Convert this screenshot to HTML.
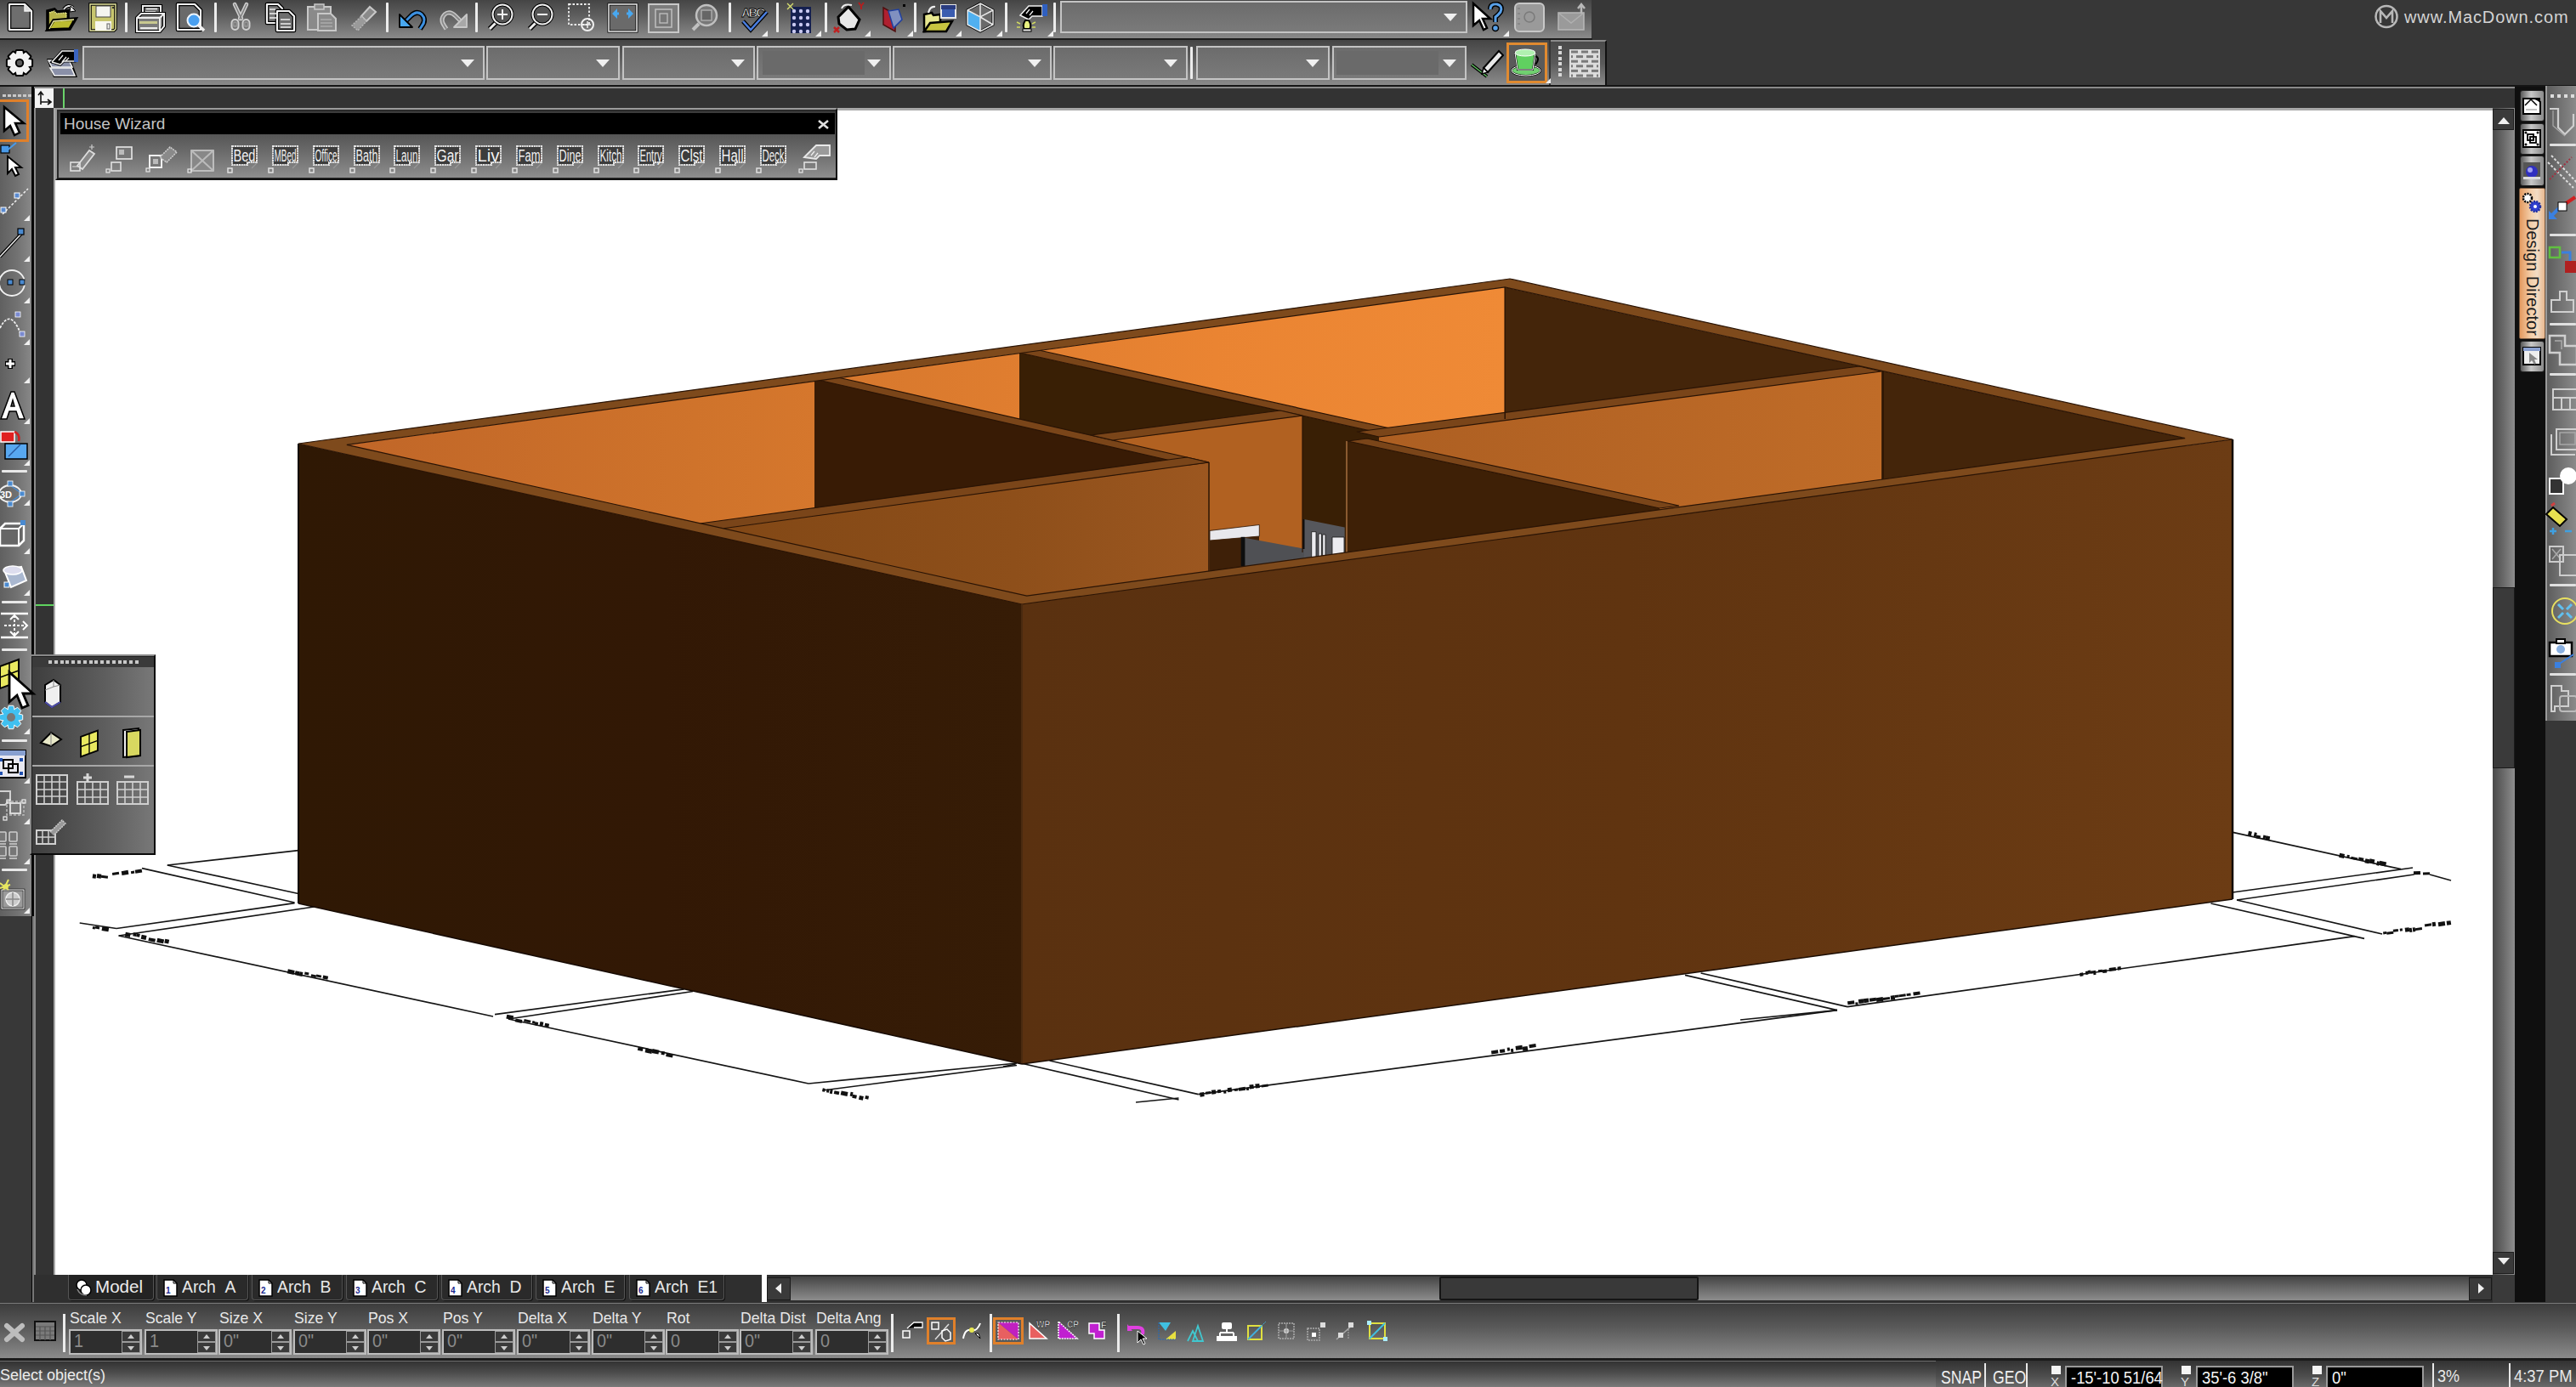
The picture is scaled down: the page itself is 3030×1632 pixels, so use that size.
<!DOCTYPE html><html><head><meta charset="utf-8"><style>
*{margin:0;padding:0;box-sizing:border-box}
html,body{width:3030px;height:1632px;overflow:hidden;background:#373737;font-family:"Liberation Sans",sans-serif}
.a{position:absolute}
.tb{background:linear-gradient(#454545,#5e5e5e 40%,#8a8a8a)}
.combo{position:absolute;border:2px solid #c4c4c4;background:linear-gradient(#6c6c6c,#7a7a7a)}
.combo:after{content:"";position:absolute;right:10px;top:50%;margin-top:-4px;border-left:8px solid transparent;border-right:8px solid transparent;border-top:9px solid #f0f0f0}
.sep{position:absolute;width:3px;background:#e8e8e8;border-radius:1px}
svg{position:absolute;overflow:visible}
</style></head><body>
<div class="a tb" style="left:0px;top:0px;width:1872px;height:45px;"></div>
<div class="a" style="left:0px;top:45px;width:1873px;height:2px;background:#1c1c1c"></div>
<div class="a tb" style="left:0px;top:47px;width:1822px;height:53px;"></div>
<div class="a" style="left:1824px;top:47px;width:66px;height:53px;border-top:2px solid #8a8a8a;border-right:2px solid #111;background:linear-gradient(#4a4a4a,#5a5a5a 50%,#8a8a8a)"></div>
<div class="a" style="left:0px;top:100px;width:3030px;height:3px;background:#151515"></div>
<div class="a" style="left:40px;top:102px;width:2918px;height:2px;background:#8a8a8a"></div>
<div class="a" style="left:40px;top:104px;width:2918px;height:23px;background:#333"></div>
<div class="a" style="left:41px;top:104px;width:22px;height:23px;background:#f2f2f2"></div>
<div class="a" style="left:74px;top:104px;width:2px;height:23px;background:#6ad36a"></div>
<div class="a" style="left:63px;top:127px;width:2869px;height:1373px;background:#fff"></div>
<div class="a" style="left:63px;top:127px;width:2869px;height:3px;background:#a8a8a8"></div>
<div class="a" style="left:63px;top:127px;width:2px;height:1373px;background:#a8a8a8"></div>
<div class="a" style="left:40px;top:127px;width:23px;height:1373px;background:#333"></div>
<div class="a" style="left:40px;top:711px;width:23px;height:2px;background:#5fd35f"></div>
<div class="a" style="left:0px;top:102px;width:37px;height:976px;background:linear-gradient(90deg,#606060,#727272 55%,#888)"></div>
<div class="a" style="left:0px;top:1078px;width:36px;height:454px;background:#383838"></div>
<div class="a" style="left:37px;top:102px;width:3px;height:1430px;background:#050505"></div>
<div class="a" style="left:40px;top:127px;width:2px;height:1373px;background:#8a8a8a"></div>
<div class="a" style="left:38px;top:1078px;width:2px;height:454px;background:#777"></div>
<div class="a" style="left:2932px;top:127px;width:26px;height:1373px;background:linear-gradient(90deg,#4a4a4a,#6a6a6a 50%,#8e8e8e)"></div>
<div class="a" style="left:2932px;top:128px;width:25px;height:25px;background:#3a3a3a;border:1px solid #1e1e1e"></div>
<div class="a" style="left:2932px;top:1473px;width:25px;height:26px;background:#3a3a3a;border:1px solid #1e1e1e"></div>
<div class="a" style="left:2932px;top:691px;width:26px;height:213px;background:#3a3a3a;border:1px solid #1a1a1a"></div>
<div class="a" style="left:2958px;top:102px;width:36px;height:1430px;background:#0f0f0f"></div>
<div class="a" style="left:2994px;top:101px;width:36px;height:747px;background:linear-gradient(90deg,#5a5a5a,#8a8a8a)"></div>
<div class="a" style="left:2994px;top:101px;width:2px;height:747px;background:#9a9a9a"></div>
<div class="a" style="left:40px;top:1500px;width:2892px;height:33px;background:#2f2f2f"></div>
<div class="a" style="left:2932px;top:1500px;width:26px;height:32px;background:#3a3a3a"></div>
<div class="a" style="left:930px;top:1502px;width:1974px;height:28px;background:linear-gradient(#444,#666 45%,#8c8c8c)"></div>
<div class="a" style="left:902px;top:1503px;width:28px;height:27px;background:#3a3a3a;border:1px solid #1a1a1a"></div>
<div class="a" style="left:2904px;top:1503px;width:27px;height:27px;background:#3a3a3a;border:1px solid #1a1a1a"></div>
<div class="a" style="left:1693px;top:1502px;width:305px;height:28px;background:#393939;border:2px solid #151515;border-radius:2px"></div>
<div class="a" style="left:0px;top:1533px;width:3030px;height:65px;background:linear-gradient(#3c3c3c,#5a5a5a 45%,#8a8a8a)"></div>
<div class="a" style="left:0px;top:1533px;width:3030px;height:1px;background:#7a7a7a"></div>
<div class="a" style="left:0px;top:1598px;width:3030px;height:3px;background:#1a1a1a"></div>
<div class="a" style="left:0px;top:1601px;width:3030px;height:31px;background:linear-gradient(#303030,#4c4c4c 45%,#7a7a7a)"></div>
<div class="a" style="left:0px;top:1601px;width:3030px;height:1px;background:#6e6e6e"></div>
<svg width="3030" height="1632" style="left:0;top:0" viewBox="0 0 3030 1632">
<defs>
<linearGradient id="gAB" x1="0" y1="0" x2="1" y2="0" gradientUnits="objectBoundingBox"><stop offset="0" stop-color="#c06628"/><stop offset="0.3" stop-color="#cf732b"/><stop offset="0.75" stop-color="#ea8432"/><stop offset="1" stop-color="#ef8a36"/></linearGradient>
<linearGradient id="gDC" x1="0" y1="0" x2="1" y2="0"><stop offset="0" stop-color="#5a3110"/><stop offset="0.5" stop-color="#603410"/><stop offset="1" stop-color="#6c3c14"/></linearGradient>
<linearGradient id="gAD" x1="0" y1="0" x2="1" y2="0"><stop offset="0" stop-color="#2f1804"/><stop offset="0.5" stop-color="#321805"/><stop offset="1" stop-color="#361c06"/></linearGradient>
<linearGradient id="gW2" x1="0" y1="0" x2="1" y2="0"><stop offset="0" stop-color="#824816"/><stop offset="0.6" stop-color="#8e4f1a"/><stop offset="1" stop-color="#9c5720"/></linearGradient>
<linearGradient id="gW5" x1="0" y1="0" x2="1" y2="0"><stop offset="0" stop-color="#ad5f22"/><stop offset="1" stop-color="#c06c28"/></linearGradient>
</defs>
<line x1="196.8" y1="1018.0" x2="351.0" y2="1000.6" stroke="#151515" stroke-width="1.7"/>
<line x1="196.8" y1="1018.0" x2="351.0" y2="1051.5" stroke="#151515" stroke-width="1.7"/>
<line x1="167.0" y1="1021.7" x2="346.5" y2="1062.0" stroke="#151515" stroke-width="1.7"/>
<line x1="137.0" y1="1092.5" x2="346.5" y2="1062.7" stroke="#151515" stroke-width="1.7"/>
<line x1="93.7" y1="1086.0" x2="137.0" y2="1092.5" stroke="#151515" stroke-width="1.7"/>
<line x1="139.6" y1="1101.0" x2="369.4" y2="1067.0" stroke="#151515" stroke-width="1.7"/>
<line x1="139.6" y1="1101.0" x2="580.0" y2="1196.0" stroke="#151515" stroke-width="1.7"/>
<line x1="582.0" y1="1193.7" x2="804.6" y2="1163.8" stroke="#151515" stroke-width="1.7"/>
<line x1="598.0" y1="1199.0" x2="815.0" y2="1166.5" stroke="#151515" stroke-width="1.7"/>
<line x1="598.0" y1="1199.0" x2="951.0" y2="1275.0" stroke="#151515" stroke-width="1.7"/>
<line x1="951.0" y1="1275.0" x2="1196.0" y2="1251.0" stroke="#151515" stroke-width="1.7"/>
<line x1="967.6" y1="1283.0" x2="1196.0" y2="1253.5" stroke="#151515" stroke-width="1.7"/>
<line x1="1180.0" y1="1255.0" x2="1194.7" y2="1252.0" stroke="#151515" stroke-width="1.7"/>
<line x1="1201.0" y1="1251.0" x2="1386.5" y2="1294.0" stroke="#151515" stroke-width="1.7"/>
<line x1="1234.5" y1="1248.0" x2="1409.6" y2="1287.7" stroke="#151515" stroke-width="1.7"/>
<line x1="1409.6" y1="1287.7" x2="2161.0" y2="1188.7" stroke="#151515" stroke-width="1.7"/>
<line x1="1336.0" y1="1297.0" x2="1386.5" y2="1292.0" stroke="#151515" stroke-width="1.7"/>
<line x1="1982.0" y1="1147.4" x2="2161.0" y2="1188.7" stroke="#151515" stroke-width="1.7"/>
<line x1="2000.6" y1="1145.0" x2="2173.0" y2="1184.6" stroke="#151515" stroke-width="1.7"/>
<line x1="2173.0" y1="1184.6" x2="2769.6" y2="1101.6" stroke="#151515" stroke-width="1.7"/>
<line x1="2047.0" y1="1200.0" x2="2161.0" y2="1188.7" stroke="#151515" stroke-width="1.7"/>
<line x1="2626.4" y1="979.3" x2="2824.0" y2="1022.7" stroke="#151515" stroke-width="1.7"/>
<line x1="2626.0" y1="1050.0" x2="2838.0" y2="1021.0" stroke="#151515" stroke-width="1.7"/>
<line x1="2631.0" y1="1059.0" x2="2839.5" y2="1029.0" stroke="#151515" stroke-width="1.7"/>
<line x1="2858.0" y1="1029.0" x2="2883.0" y2="1036.0" stroke="#151515" stroke-width="1.7"/>
<line x1="2631.0" y1="1059.0" x2="2802.0" y2="1099.0" stroke="#151515" stroke-width="1.7"/>
<line x1="2600.5" y1="1063.0" x2="2781.0" y2="1104.4" stroke="#151515" stroke-width="1.7"/>
<g transform="translate(117.5 1031.0) rotate(8)"><rect x="-8.5" y="-1.5" width="4" height="5" fill="#111"/><rect x="-3.5" y="-2.5" width="5" height="5" fill="#111"/><rect x="1.5" y="-1.5" width="8" height="3" fill="#111"/></g>
<g transform="translate(149.5 1026.5) rotate(-10)"><rect x="-17.5" y="-2.5" width="8" height="3" fill="#111"/><rect x="-6.5" y="-2.5" width="8" height="5" fill="#111"/><rect x="4.5" y="-0.5" width="4" height="3" fill="#111"/><rect x="9.5" y="-1.0" width="8" height="4" fill="#111"/></g>
<g transform="translate(117.5 1092.0) rotate(10)"><rect x="-8.5" y="-0.5" width="3" height="3" fill="#111"/><rect x="-5.5" y="-1.5" width="5" height="3" fill="#111"/><rect x="2.5" y="-2.5" width="8" height="5" fill="#111"/></g>
<g transform="translate(174.5 1104.0) rotate(12)"><rect x="-27.5" y="-1.5" width="6" height="5" fill="#111"/><rect x="-18.5" y="-3.0" width="4" height="4" fill="#111"/><rect x="-14.5" y="-3.0" width="4" height="4" fill="#111"/><rect x="-8.5" y="-2.5" width="6" height="5" fill="#111"/><rect x="0.5" y="-1.0" width="8" height="4" fill="#111"/><rect x="10.5" y="-2.5" width="8" height="5" fill="#111"/><rect x="19.5" y="-3.5" width="5" height="5" fill="#111"/></g>
<g transform="translate(363.0 1147.0) rotate(12)"><rect x="-25.0" y="-1.5" width="8" height="5" fill="#111"/><rect x="-16.0" y="-1.5" width="5" height="5" fill="#111"/><rect x="-11.0" y="-1.5" width="4" height="5" fill="#111"/><rect x="-5.0" y="-2.5" width="5" height="3" fill="#111"/><rect x="3.0" y="-1.5" width="6" height="3" fill="#111"/><rect x="9.0" y="-2.5" width="6" height="3" fill="#111"/><rect x="17.0" y="-3.0" width="6" height="4" fill="#111"/></g>
<g transform="translate(623.5 1203.0) rotate(12)"><rect x="-28.5" y="-3.5" width="8" height="5" fill="#111"/><rect x="-17.5" y="-1.0" width="8" height="4" fill="#111"/><rect x="-7.5" y="-2.5" width="8" height="3" fill="#111"/><rect x="2.5" y="-2.5" width="3" height="3" fill="#111"/><rect x="5.5" y="-2.0" width="4" height="4" fill="#111"/><rect x="11.5" y="-3.5" width="4" height="5" fill="#111"/><rect x="17.5" y="-3.0" width="5" height="4" fill="#111"/></g>
<g transform="translate(772.0 1237.5) rotate(12)"><rect x="-22.0" y="-1.0" width="6" height="4" fill="#111"/><rect x="-13.0" y="-1.5" width="8" height="5" fill="#111"/><rect x="-5.0" y="-2.5" width="8" height="5" fill="#111"/><rect x="6.0" y="-2.0" width="4" height="4" fill="#111"/><rect x="12.0" y="-1.0" width="8" height="4" fill="#111"/></g>
<g transform="translate(997.0 1287.5) rotate(12)"><rect x="-30.0" y="-1.0" width="3" height="4" fill="#111"/><rect x="-25.0" y="-1.0" width="3" height="4" fill="#111"/><rect x="-21.0" y="-1.5" width="3" height="5" fill="#111"/><rect x="-16.0" y="-1.0" width="6" height="4" fill="#111"/><rect x="-8.0" y="-2.5" width="8" height="5" fill="#111"/><rect x="3.0" y="-3.5" width="3" height="5" fill="#111"/><rect x="6.0" y="-1.0" width="5" height="4" fill="#111"/><rect x="14.0" y="-1.5" width="5" height="5" fill="#111"/><rect x="21.0" y="-3.0" width="4" height="4" fill="#111"/></g>
<g transform="translate(1452.5 1282.5) rotate(-8)"><rect x="-41.5" y="-2.5" width="5" height="5" fill="#111"/><rect x="-34.5" y="-2.5" width="6" height="3" fill="#111"/><rect x="-27.5" y="-3.5" width="5" height="5" fill="#111"/><rect x="-20.5" y="-3.0" width="4" height="4" fill="#111"/><rect x="-13.5" y="-0.5" width="3" height="3" fill="#111"/><rect x="-8.5" y="-3.5" width="5" height="5" fill="#111"/><rect x="-0.5" y="-1.5" width="4" height="3" fill="#111"/><rect x="4.5" y="-2.0" width="8" height="4" fill="#111"/><rect x="13.5" y="-0.5" width="3" height="3" fill="#111"/><rect x="17.5" y="-3.5" width="5" height="5" fill="#111"/><rect x="24.5" y="-3.5" width="5" height="5" fill="#111"/><rect x="31.5" y="-1.5" width="8" height="3" fill="#111"/></g>
<g transform="translate(1778.5 1235.0) rotate(-8)"><rect x="-24.5" y="-2.0" width="8" height="4" fill="#111"/><rect x="-14.5" y="-2.0" width="6" height="4" fill="#111"/><rect x="-5.5" y="-3.0" width="3" height="4" fill="#111"/><rect x="-1.5" y="-1.0" width="3" height="4" fill="#111"/><rect x="4.5" y="-3.5" width="8" height="5" fill="#111"/><rect x="12.5" y="-1.5" width="6" height="5" fill="#111"/><rect x="20.5" y="-3.0" width="8" height="4" fill="#111"/></g>
<g transform="translate(2215.0 1175.5) rotate(-8)"><rect x="-42.0" y="-3.0" width="8" height="4" fill="#111"/><rect x="-33.0" y="-0.5" width="3" height="3" fill="#111"/><rect x="-29.0" y="-3.5" width="6" height="5" fill="#111"/><rect x="-23.0" y="-3.5" width="6" height="5" fill="#111"/><rect x="-16.0" y="-3.0" width="8" height="4" fill="#111"/><rect x="-8.0" y="-2.5" width="8" height="5" fill="#111"/><rect x="0.0" y="-1.5" width="8" height="3" fill="#111"/><rect x="9.0" y="-2.5" width="5" height="5" fill="#111"/><rect x="14.0" y="-2.5" width="5" height="3" fill="#111"/><rect x="19.0" y="-2.5" width="8" height="3" fill="#111"/><rect x="28.0" y="-2.5" width="5" height="3" fill="#111"/><rect x="36.0" y="-3.0" width="8" height="4" fill="#111"/></g>
<g transform="translate(2470.5 1142.5) rotate(-8)"><rect x="-24.5" y="-1.0" width="4" height="4" fill="#111"/><rect x="-17.5" y="-2.0" width="3" height="4" fill="#111"/><rect x="-14.5" y="-2.5" width="3" height="3" fill="#111"/><rect x="-11.5" y="-1.5" width="3" height="3" fill="#111"/><rect x="-8.5" y="-1.5" width="3" height="5" fill="#111"/><rect x="-2.5" y="-1.5" width="5" height="3" fill="#111"/><rect x="2.5" y="-1.0" width="5" height="4" fill="#111"/><rect x="10.5" y="-2.0" width="8" height="4" fill="#111"/><rect x="20.5" y="-2.0" width="4" height="4" fill="#111"/></g>
<g transform="translate(2657.0 984.0) rotate(12)"><rect x="-13.0" y="-3.5" width="4" height="5" fill="#111"/><rect x="-6.0" y="-3.5" width="3" height="5" fill="#111"/><rect x="-3.0" y="-1.0" width="5" height="4" fill="#111"/><rect x="5.0" y="-2.5" width="3" height="5" fill="#111"/><rect x="8.0" y="-2.5" width="5" height="5" fill="#111"/></g>
<g transform="translate(2778.5 1012.0) rotate(12)"><rect x="-27.5" y="-2.5" width="6" height="5" fill="#111"/><rect x="-18.5" y="-2.5" width="3" height="3" fill="#111"/><rect x="-13.5" y="-1.5" width="8" height="3" fill="#111"/><rect x="-4.5" y="-2.5" width="6" height="3" fill="#111"/><rect x="3.5" y="-2.5" width="5" height="5" fill="#111"/><rect x="8.5" y="-3.5" width="6" height="5" fill="#111"/><rect x="17.5" y="-2.5" width="3" height="5" fill="#111"/><rect x="20.5" y="-3.5" width="8" height="5" fill="#111"/></g>
<g transform="translate(2824.0 1095.0) rotate(-8)"><rect x="-21.0" y="-1.5" width="4" height="3" fill="#111"/><rect x="-17.0" y="-0.5" width="8" height="3" fill="#111"/><rect x="-9.0" y="-2.5" width="6" height="3" fill="#111"/><rect x="-1.0" y="-2.5" width="3" height="3" fill="#111"/><rect x="5.0" y="-2.5" width="5" height="5" fill="#111"/><rect x="10.0" y="-1.5" width="3" height="5" fill="#111"/><rect x="14.0" y="-1.5" width="3" height="5" fill="#111"/><rect x="17.0" y="-0.5" width="8" height="3" fill="#111"/></g>
<g transform="translate(2869.5 1087.5) rotate(-8)"><rect x="-17.5" y="-2.5" width="8" height="3" fill="#111"/><rect x="-8.5" y="-3.5" width="4" height="5" fill="#111"/><rect x="-1.5" y="-2.5" width="8" height="5" fill="#111"/><rect x="8.5" y="-2.5" width="5" height="5" fill="#111"/></g>
<g transform="translate(2848.5 1028.0) rotate(-2)"><rect x="-9.5" y="-3.0" width="8" height="4" fill="#111"/><rect x="1.5" y="-1.5" width="8" height="3" fill="#111"/></g>
<polygon points="407.9,523.4 1770.2,337.9 1770.2,878.9 407.9,1064.4" fill="url(#gAB)" stroke="none" stroke-width="0" />
<polygon points="1770.2,337.9 2570.1,515.6 2570.1,1056.6 1770.2,878.9" fill="#44250a" stroke="none" stroke-width="0" />
<polygon points="1199.0,415.0 1630.0,511.0 1630.0,1052.0 1199.0,956.0" fill="#391f05" stroke="none" stroke-width="0" />
<polygon points="1309.0,518.0 1532.0,489.0 1532.0,1030.0 1309.0,1059.0" fill="#b16121" stroke="none" stroke-width="0" />
<polygon points="958.0,446.0 1422.0,544.0 1422.0,1085.0 958.0,987.0" fill="#381b05" stroke="none" stroke-width="0" />
<polygon points="849.0,622.0 1422.0,544.0 1422.0,1085.0 849.0,1163.0" fill="url(#gW2)" stroke="none" stroke-width="0" />
<polygon points="1423.0,624.4 1481.3,617.5 1481.3,631.0 1423.0,636.0" fill="#e8e8ec" stroke="#2a1405" stroke-width="0.8" />
<polygon points="1423.0,636.0 1481.0,631.0 1481.0,690.0 1423.0,690.0" fill="#3e2008" stroke="none" stroke-width="0" />
<polygon points="1464.0,632.7 1543.0,647.4 1543.0,656.0 1464.0,667.0" fill="#4f5054" stroke="none" stroke-width="0" />
<polygon points="1459.7,631.8 1464.4,631.8 1464.4,668.0 1459.7,668.0" fill="#0e0e0e" stroke="none" stroke-width="0" />
<polygon points="1534.0,611.0 1581.7,620.5 1581.7,651.0 1534.0,656.0" fill="#56575c" stroke="none" stroke-width="0" />
<polygon points="1532.0,611.0 1534.5,611.0 1534.5,646.0 1532.0,646.0" fill="#0e0e0e" stroke="none" stroke-width="0" />
<polygon points="1542.7,625.7 1548.0,625.7 1548.0,656.0 1542.7,656.0" fill="#ececf0" stroke="#111" stroke-width="0.8" />
<polygon points="1551.0,628.0 1554.4,628.0 1554.4,655.0 1551.0,655.0" fill="#ececf0" stroke="#111" stroke-width="0.8" />
<polygon points="1555.7,629.0 1559.0,629.0 1559.0,654.0 1555.7,654.0" fill="#ececf0" stroke="#111" stroke-width="0.8" />
<polygon points="1567.0,632.0 1581.0,632.0 1581.0,653.0 1567.0,653.0" fill="#ececf0" stroke="#111" stroke-width="0.8" />
<polygon points="1622.0,514.0 2213.0,437.0 2213.0,978.0 1622.0,1055.0" fill="url(#gW5)" stroke="none" stroke-width="0" />
<polygon points="1585.0,519.0 1952.0,598.0 1952.0,1139.0 1585.0,1060.0" fill="#3e2006" stroke="none" stroke-width="0" />
<line x1="1584.0" y1="519.0" x2="1584.0" y2="660.0" stroke="#8a5a30" stroke-width="2"/>
<polygon points="958.0,446.0 1399.0,547.0 1422.0,544.0 981.0,443.0" fill="#7a4519" stroke="#2a1405" stroke-width="1.2" />
<polygon points="849.0,622.0 1422.0,544.0 1396.0,538.0 823.0,616.0" fill="#7a4519" stroke="#2a1405" stroke-width="1.2" />
<polygon points="1199.0,415.0 1630.0,511.0 1653.0,508.0 1222.0,412.0" fill="#7a4519" stroke="#2a1405" stroke-width="1.2" />
<polygon points="1309.0,518.0 1532.0,489.0 1506.0,483.0 1283.0,512.0" fill="#7a4519" stroke="#2a1405" stroke-width="1.2" />
<polygon points="1622.0,514.0 2213.0,437.0 2187.0,431.0 1596.0,508.0" fill="#7a4519" stroke="#2a1405" stroke-width="1.2" />
<polygon points="1585.0,519.0 1952.0,598.0 1975.0,595.0 1608.0,516.0" fill="#7a4519" stroke="#2a1405" stroke-width="1.2" />
<line x1="1770.2" y1="337.9" x2="1770.2" y2="493.0" stroke="#2a1405" stroke-width="1.5"/>
<line x1="2215.0" y1="437.0" x2="2215.0" y2="570.0" stroke="#2a1405" stroke-width="1.5"/>
<line x1="1422.0" y1="544.0" x2="1422.0" y2="672.0" stroke="#2a1405" stroke-width="1.5"/>
<line x1="1532.0" y1="489.0" x2="1532.0" y2="650.0" stroke="#2a1405" stroke-width="1.2"/>
<polygon points="351.0,522.0 1202.0,711.0 1202.0,1252.0 351.0,1063.0" fill="url(#gAD)" stroke="none" stroke-width="0" />
<polygon points="1202.0,711.0 2626.0,517.0 2626.0,1058.0 1202.0,1252.0" fill="url(#gDC)" stroke="none" stroke-width="0" />
<path d="M351.0,522.0 L1776.0,328.0 L2626.0,517.0 L1202.0,711.0 Z M407.9,523.4 L1770.2,337.9 L2570.1,515.6 L1207.8,701.1 Z" fill="#7e4a1c" fill-rule="evenodd" stroke="#2a1405" stroke-width="1.2"/>
<line x1="1202.0" y1="711.0" x2="1202.0" y2="1252.0" stroke="#4a2a10" stroke-width="2"/>
<line x1="351.0" y1="522.0" x2="351.0" y2="1063.0" stroke="#120800" stroke-width="2"/>
<line x1="2626.0" y1="517.0" x2="2626.0" y2="1058.0" stroke="#120800" stroke-width="2.5"/>
<line x1="351.0" y1="1063.0" x2="1202.0" y2="1252.0" stroke="#160a02" stroke-width="1.5"/>
<line x1="1202.0" y1="1252.0" x2="2626.0" y2="1058.0" stroke="#1a0c02" stroke-width="1.5"/>
</svg>
<svg style="left:9px;top:3px" width="31" height="35" viewBox="0 0 31 35"><path d="M2,2 H20 L28,10 V32 H2 Z" fill="#6e6e6e" stroke="#000" stroke-width="4.6" stroke-linejoin="round"/><path d="M2,2 H20 L28,10 V32 H2 Z" fill="none" stroke="#f4f4f4" stroke-width="2.2" stroke-linejoin="round"/><path d="M20,2 V10 H28" fill="#ddd" stroke="#f4f4f4" stroke-width="1.5"/></svg>
<svg style="left:53px;top:3px" width="38" height="34" viewBox="0 0 38 34"><path d="M3,10 L11,8 L14,11 L27,10 V24 L3,31 Z" fill="#b8b44a" stroke="#000" stroke-width="3.6"/><path d="M5,12 L11,10 L13,13 L25,12 V22" fill="none" stroke="#e8e890" stroke-width="1.4" stroke-dasharray="1.5 1"/><path d="M3,32 L10,21 L36,19 L29,31 Z" fill="#bcbc30" stroke="#000" stroke-width="3.6"/><path d="M5,31 L10,22 L34,20" fill="none" stroke="#f0f0a0" stroke-width="1.4"/><path d="M22,8 Q27,1 33,6" fill="none" stroke="#000" stroke-width="4"/><path d="M22,8 Q27,1 33,6" fill="none" stroke="#e0e0e0" stroke-width="2"/><path d="M30,4 L36,10 L29,11 Z" fill="#e0e0e0" stroke="#000" stroke-width="1"/></svg>
<svg style="left:104px;top:3px" width="35" height="35" viewBox="0 0 35 35"><path d="M2,2 H32 V31 L30,33 H2 Z" fill="#c8c66e" stroke="#000" stroke-width="3.6"/><path d="M2,2 H32 V31 L30,33 H2 Z" fill="none" stroke="#e8e8a0" stroke-width="1.4"/><rect x="9" y="4" width="17" height="13" fill="#f4f4f0" stroke="#444" stroke-width="1"/><rect x="8" y="22" width="19" height="11" fill="#f8f8f0"/><rect x="22" y="25" width="3" height="6" fill="none" stroke="#777" stroke-width="1.2"/><circle cx="29" cy="6" r="1.2" fill="#333"/></svg>
<svg style="left:147px;top:3px" width="3" height="35" viewBox="0 0 3 35"><rect x="0" y="0" width="3" height="35" rx="1" fill="#ececec"/></svg>
<svg style="left:159px;top:4px" width="36" height="34" viewBox="0 0 36 34"><path d="M9,3 H30 V13 H9 Z" fill="#707070" stroke="#000" stroke-width="4.2"/><path d="M9,3 H30 V13 H9 Z" fill="none" stroke="#eee" stroke-width="2"/><path d="M13,6.5 H26 M12,10 H24" stroke="#eee" stroke-width="1.4"/><path d="M2,17 L7,12 H34 V27 L29,33 H2 Z" fill="#7a7a7a" stroke="#000" stroke-width="4.2"/><path d="M2,17 L7,12 H34 V27 L29,33 H2 Z M2,17 H29 V33 M29,17 L34,12" fill="none" stroke="#eee" stroke-width="2"/><rect x="5" y="21" width="21" height="3" fill="#c8c890"/><rect x="6" y="28" width="20" height="2.5" fill="#e8e8e8"/></svg>
<svg style="left:207px;top:3px" width="37" height="36" viewBox="0 0 37 36"><path d="M2,2 H22 L29,9 V32 H2 Z" fill="#6a6a6a" stroke="#000" stroke-width="4.6" stroke-linejoin="round"/><path d="M2,2 H22 L29,9 V32 H2 Z" fill="none" stroke="#f4f4f4" stroke-width="2.2" stroke-linejoin="round"/><circle cx="21" cy="21" r="7.5" fill="#4aa0f0" stroke="#eef6ff" stroke-width="2"/><path d="M26,26 L33,33" stroke="#f0f0f0" stroke-width="3.5"/></svg>
<svg style="left:252px;top:3px" width="3" height="35" viewBox="0 0 3 35"><rect x="0" y="0" width="3" height="35" rx="1" fill="#ececec"/></svg>
<svg style="left:271px;top:3px" width="25" height="34" viewBox="0 0 25 34"><g fill="none" stroke-linecap="round"><path d="M5,2 L13,19 M19,2 L11,19" stroke="#d0d0d0" stroke-width="4.5"/><path d="M5,2 L13,19 M19,2 L11,19" stroke="#808080" stroke-width="1.6"/><rect x="1.5" y="20" width="8" height="12" rx="4" stroke="#d0d0d0" stroke-width="2"/><rect x="14.5" y="20" width="8" height="12" rx="4" stroke="#d0d0d0" stroke-width="2"/><rect x="4" y="23" width="3" height="5" stroke="#aaa" stroke-width="1"/><rect x="17" y="23" width="3" height="5" stroke="#aaa" stroke-width="1"/></g></svg>
<svg style="left:312px;top:3px" width="38" height="35" viewBox="0 0 38 35"><path d="M2,2 H15 L20,7 V24 H2 Z" fill="#7a7a7a" stroke="#000" stroke-width="4.6" stroke-linejoin="round"/><path d="M2,2 H15 L20,7 V24 H2 Z" fill="none" stroke="#f4f4f4" stroke-width="2.2" stroke-linejoin="round"/><path d="M14,10 H28 L34,16 V33 H14 Z" fill="#6e6e6e" stroke="#000" stroke-width="4.6" stroke-linejoin="round"/><path d="M14,10 H28 L34,16 V33 H14 Z" fill="none" stroke="#f4f4f4" stroke-width="2.2" stroke-linejoin="round"/><g stroke="#eee" stroke-width="1.5"><path d="M5,8 H12 M5,13 H15 M5,18 H15 M18,20 H29 M18,25 H30 M18,29 H30"/></g></svg>
<svg style="left:359px;top:3px" width="38" height="35" viewBox="0 0 38 35"><path d="M3,5 H30 V32 H3 Z" fill="#8a8a8a" stroke="#c8c8c8" stroke-width="2" rx="3"/><rect x="11" y="2" width="11" height="6" fill="#8a8a8a" stroke="#c8c8c8" stroke-width="1.5"/><path d="M15,13 H30 L36,19 V33 H15 Z" fill="#8a8a8a" stroke="#c8c8c8" stroke-width="2"/><g stroke="#bbb" stroke-width="1.2"><path d="M18,20 H31 M18,24 H32 M18,28 H32"/></g></svg>
<svg style="left:411px;top:5px" width="34" height="33" viewBox="0 0 34 33"><path d="M24,3 L31,9 L20,20 L14,14 Z" fill="#8a8a8a" stroke="#c8c8c8" stroke-width="2"/><path d="M14,14 L20,20 L10,31 L3,25 Z" fill="#9a9a9a" stroke="#b8b8b8" stroke-width="1.4" stroke-dasharray="2 1.5"/></svg>
<svg style="left:454px;top:3px" width="3" height="35" viewBox="0 0 3 35"><rect x="0" y="0" width="3" height="35" rx="1" fill="#ececec"/></svg>
<svg style="left:469px;top:6px" width="33" height="32" viewBox="0 0 33 32"><path d="M8,19 L14,13 Q21,6 27,11 Q33,17 27,25 L25,28" fill="none" stroke="#000" stroke-width="6"/><path d="M8,19 L14,13 Q21,6 27,11 Q33,17 27,25 L25,28" fill="none" stroke="#3c90e0" stroke-width="3"/><path d="M1,11 V26 H16 Z" fill="#48a8f0" stroke="#000" stroke-width="1.8" stroke-linejoin="round"/></svg>
<svg style="left:517px;top:6px" width="33" height="32" viewBox="0 0 33 32"><path d="M25,19 L19,13 Q12,6 6,11 Q0,17 6,25 L8,28" fill="none" stroke="#c8c8c8" stroke-width="5"/><path d="M25,19 L19,13 Q12,6 6,11 Q0,17 6,25 L8,28" fill="none" stroke="#8a8a8a" stroke-width="2"/><path d="M32,11 V26 H17 Z" fill="#a8a8a8" stroke="#c8c8c8" stroke-width="1.8" stroke-linejoin="round"/></svg>
<svg style="left:559px;top:3px" width="3" height="35" viewBox="0 0 3 35"><rect x="0" y="0" width="3" height="35" rx="1" fill="#ececec"/></svg>
<svg style="left:572px;top:3px" width="36" height="36" viewBox="0 0 36 36"><path d="M4,31 L11,24" stroke="#000" stroke-width="6"/><path d="M4,31 L11,24" stroke="#f0f0f0" stroke-width="3"/><circle cx="19" cy="14" r="11.5" fill="#555" stroke="#000" stroke-width="4"/><circle cx="19" cy="14" r="11.5" fill="none" stroke="#f2f2f2" stroke-width="2"/><path d="M13,14 H25" stroke="#f2f2f2" stroke-width="2"/><path d="M19,8 V20" stroke="#f2f2f2" stroke-width="2"/></svg>
<svg style="left:619px;top:3px" width="36" height="36" viewBox="0 0 36 36"><path d="M4,31 L11,24" stroke="#000" stroke-width="6"/><path d="M4,31 L11,24" stroke="#f0f0f0" stroke-width="3"/><circle cx="19" cy="14" r="11.5" fill="#555" stroke="#000" stroke-width="4"/><circle cx="19" cy="14" r="11.5" fill="none" stroke="#f2f2f2" stroke-width="2"/><path d="M13,14 H25" stroke="#f2f2f2" stroke-width="2"/></svg>
<svg style="left:667px;top:3px" width="36" height="36" viewBox="0 0 36 36"><rect x="2" y="2" width="24" height="24" fill="none" stroke="#f0f0f0" stroke-width="1.8" stroke-dasharray="2.5 2"/><circle cx="24" cy="26" r="7" fill="none" stroke="#f0f0f0" stroke-width="2"/><path d="M20,26 H28 M24,22 V30" stroke="#f0f0f0" stroke-width="1.5"/></svg>
<svg style="left:714px;top:3px" width="37" height="36" viewBox="0 0 37 36"><rect x="2" y="2" width="33" height="32" fill="#6a6a6a" stroke="#000" stroke-width="3"/><rect x="2" y="2" width="33" height="32" fill="none" stroke="#f0f0f0" stroke-width="1.5"/><path d="M6,13 L12,7 V19 Z M31,13 L25,7 V19 Z" fill="#48a8f0"/><path d="M11,13 H14 M23,13 H26" stroke="#48a8f0" stroke-width="3"/></svg>
<svg style="left:761px;top:3px" width="39" height="36" viewBox="0 0 39 36"><rect x="2" y="2" width="35" height="33" fill="#7c7c7c" stroke="#c8c8c8" stroke-width="2"/><rect x="10" y="8" width="19" height="21" fill="#777" stroke="#bbb" stroke-width="1.6"/><rect x="15" y="13" width="9" height="11" fill="none" stroke="#bbb" stroke-width="1.4"/></svg>
<svg style="left:811px;top:3px" width="35" height="36" viewBox="0 0 35 36"><circle cx="20" cy="15" r="12" fill="#777" stroke="#c0c0c0" stroke-width="2.5"/><rect x="14" y="9" width="12" height="12" fill="#666" stroke="#aaa" stroke-width="1.5"/><path d="M4,32 L11,25" stroke="#c0c0c0" stroke-width="4"/></svg>
<svg style="left:857px;top:3px" width="3" height="35" viewBox="0 0 3 35"><rect x="0" y="0" width="3" height="35" rx="1" fill="#ececec"/></svg>
<svg style="left:871px;top:4px" width="33" height="36" viewBox="0 0 33 36"><text x="1" y="16" font-family="Liberation Sans" font-weight="bold" font-size="15" fill="#f4f4f4" stroke="#000" stroke-width="0.8" textLength="28">ABC</text><path d="M3,21 L12,31 L31,10" fill="none" stroke="#000" stroke-width="5"/><path d="M3,21 L12,31 L31,10" fill="none" stroke="#4a7ee0" stroke-width="2.6"/></svg>
<svg style="left:913px;top:3px" width="3" height="35" viewBox="0 0 3 35"><rect x="0" y="0" width="3" height="35" rx="1" fill="#ececec"/></svg>
<svg style="left:925px;top:3px" width="30" height="36" viewBox="0 0 30 36"><rect x="5" y="5" width="24" height="31" fill="#152050"/><circle cx="9" cy="10" r="2.2" fill="#c8c8f0"/><circle cx="17" cy="10" r="2.2" fill="#c8c8f0"/><circle cx="25" cy="10" r="2.2" fill="#c8c8f0"/><circle cx="9" cy="18" r="2.2" fill="#c8c8f0"/><circle cx="17" cy="18" r="2.2" fill="#c8c8f0"/><circle cx="25" cy="18" r="2.2" fill="#c8c8f0"/><circle cx="9" cy="26" r="2.2" fill="#c8c8f0"/><circle cx="17" cy="26" r="2.2" fill="#c8c8f0"/><circle cx="25" cy="26" r="2.2" fill="#c8c8f0"/><circle cx="9" cy="34" r="2.2" fill="#c8c8f0"/><circle cx="17" cy="34" r="2.2" fill="#c8c8f0"/><circle cx="25" cy="34" r="2.2" fill="#c8c8f0"/><path d="M1,1 L8,8 M8,1 L1,8" stroke="#d8e070" stroke-width="1.3"/></svg>
<svg style="left:970px;top:3px" width="3" height="35" viewBox="0 0 3 35"><rect x="0" y="0" width="3" height="35" rx="1" fill="#ececec"/></svg>
<svg style="left:980px;top:2px" width="40" height="38" viewBox="0 0 40 38"><path d="M6,18 L18,6 L31,21 L26,32 L16,33 L7,26 Z" fill="#e8e8e8" stroke="#000" stroke-width="3"/><path d="M10,8 Q12,2 22,4" fill="none" stroke="#eee" stroke-width="2"/><path d="M30,1 L33,5 L36,1 M33,5 V9" stroke="#b02020" stroke-width="2" fill="none"/><path d="M1,30 L7,36 M7,30 L1,36" stroke="#c02020" stroke-width="2.5"/></svg>
<svg style="left:1035px;top:3px" width="31" height="36" viewBox="0 0 31 36"><path d="M4,6 L18,14 L18,34 L4,26 Z" fill="#b02030" stroke="#501010" stroke-width="1.5"/><path d="M10,10 L22,8 L26,20 L16,30 Z" fill="#8090c0" stroke="#2040a0" stroke-width="1.5"/><rect x="27" y="2" width="3" height="3" fill="#000"/></svg>
<svg style="left:1075px;top:3px" width="3" height="35" viewBox="0 0 3 35"><rect x="0" y="0" width="3" height="35" rx="1" fill="#ececec"/></svg>
<svg style="left:1086px;top:3px" width="40" height="36" viewBox="0 0 40 36"><path d="M1,14 L10,12 L12,15 L20,14 L20,32 L1,34 Z" fill="#e8e890" stroke="#000" stroke-width="2.5"/><path d="M1,34 L8,24 L34,22 L27,34 Z" fill="#c8c440" stroke="#000" stroke-width="2.5"/><rect x="21" y="3" width="17" height="15" fill="#3a5cb0" stroke="#e8e8e8" stroke-width="2"/><rect x="21" y="3" width="17" height="5" fill="#2a3c80"/><path d="M6,12 Q8,4 14,5" fill="none" stroke="#eee" stroke-width="2.2"/></svg>
<svg style="left:1136px;top:2px" width="34" height="37" viewBox="0 0 34 37"><path d="M17,2 L32,10 V27 L17,35 L2,27 V10 Z" fill="#6a6a6a" stroke="#000" stroke-width="3"/><path d="M2,10 L17,18 V35 L2,27 Z" fill="#50b0f0"/><path d="M17,2 L32,10 V27 L17,35 L2,27 V10 Z M2,10 L17,18 L32,10 M17,18 V35 M17,2 V18 M17,18 L32,27" fill="none" stroke="#e8e8e8" stroke-width="1.5"/></svg>
<svg style="left:1182px;top:3px" width="3" height="35" viewBox="0 0 3 35"><rect x="0" y="0" width="3" height="35" rx="1" fill="#ececec"/></svg>
<svg style="left:1192px;top:2px" width="40" height="37" viewBox="0 0 40 37"><path d="M8,16 L18,5 H34 V17 H22 L18,21 Z" fill="#000" stroke="#f0f0f0" stroke-width="1.5"/><rect x="34" y="3" width="6" height="14" fill="#3060c0"/><path d="M15,14 L19,9 M19,16 L23,11" stroke="#eee" stroke-width="1.3"/><path d="M14,22 Q10,28 13,32 H19 Q22,28 18,22 Z" fill="#e8f080" stroke="#000" stroke-width="2"/><rect x="11" y="32" width="10" height="3" fill="#eee" stroke="#000"/><path d="M4,24 L8,26 M4,30 H8 M26,24 L22,26 M26,30 H22" stroke="#d0d860" stroke-width="1.5"/></svg>
<svg style="left:1239px;top:3px" width="3" height="35" viewBox="0 0 3 35"><rect x="0" y="0" width="3" height="35" rx="1" fill="#ececec"/></svg>
<svg style="left:896px;top:36px" width="7" height="7" viewBox="0 0 7 7"><path d="M0,7 L7,0 V7 Z" fill="#f0f0f0"/></svg>
<svg style="left:959px;top:36px" width="7" height="7" viewBox="0 0 7 7"><path d="M0,7 L7,0 V7 Z" fill="#f0f0f0"/></svg>
<svg style="left:1017px;top:36px" width="7" height="7" viewBox="0 0 7 7"><path d="M0,7 L7,0 V7 Z" fill="#f0f0f0"/></svg>
<svg style="left:1067px;top:36px" width="7" height="7" viewBox="0 0 7 7"><path d="M0,7 L7,0 V7 Z" fill="#f0f0f0"/></svg>
<svg style="left:1124px;top:36px" width="7" height="7" viewBox="0 0 7 7"><path d="M0,7 L7,0 V7 Z" fill="#f0f0f0"/></svg>
<svg style="left:1172px;top:36px" width="7" height="7" viewBox="0 0 7 7"><path d="M0,7 L7,0 V7 Z" fill="#f0f0f0"/></svg>
<svg style="left:1232px;top:36px" width="7" height="7" viewBox="0 0 7 7"><path d="M0,7 L7,0 V7 Z" fill="#f0f0f0"/></svg>
<svg style="left:1768px;top:36px" width="7" height="7" viewBox="0 0 7 7"><path d="M0,7 L7,0 V7 Z" fill="#f0f0f0"/></svg>
<div class="combo" style="left:1247px;top:1px;width:479px;height:38px"></div>
<svg style="left:1731px;top:2px" width="40" height="36" viewBox="0 0 40 36"><path d="M2,2 L2,28 L9,22 L14,33 L18,31 L13,20 L22,20 Z" fill="#fff" stroke="#000" stroke-width="2.5"/><path d="M22,9 Q22,2 30,3 Q37,5 34,12 Q31,16 28,18 V24" fill="none" stroke="#000" stroke-width="6"/><path d="M22,9 Q22,2 30,3 Q37,5 34,12 Q31,16 28,18 V24" fill="none" stroke="#58a0e8" stroke-width="3"/><circle cx="28" cy="31" r="3.5" fill="#58a0e8" stroke="#000" stroke-width="1.5"/></svg>
<svg style="left:1779px;top:2px" width="38" height="36" viewBox="0 0 38 36"><rect x="3" y="2" width="34" height="33" rx="5" fill="#9a9a9a" stroke="#c8c8c8" stroke-width="2"/><circle cx="20" cy="18" r="6" fill="none" stroke="#7a7a7a" stroke-width="1.5"/><path d="M6,8 H9 M6,14 H9 M6,20 H9 M6,26 H9" stroke="#777" stroke-width="1.2"/></svg>
<svg style="left:1830px;top:2px" width="38" height="36" viewBox="0 0 38 36"><rect x="3" y="13" width="30" height="20" fill="#9a9a9a" stroke="#b8b8b8" stroke-width="1.5"/><path d="M3,13 L18,25 L33,13" fill="none" stroke="#b0b0b0" stroke-width="1.5"/><path d="M30,14 V4 M26,8 L30,3 L34,8" fill="none" stroke="#b8b8b8" stroke-width="2.5"/></svg>
<svg style="left:5px;top:58px" width="36" height="32" viewBox="0 0 36 32"><path d="M28.2,11.8 L32.1,12.6 L32.1,19.4 L28.2,20.2 L28.2,20.2 L30.4,23.5 L25.5,28.4 L22.2,26.2 L22.2,26.2 L21.4,30.1 L14.6,30.1 L13.8,26.2 L13.8,26.2 L10.5,28.4 L5.6,23.5 L7.8,20.2 L7.8,20.2 L3.9,19.4 L3.9,12.6 L7.8,11.8 L7.8,11.8 L5.6,8.5 L10.5,3.6 L13.8,5.8 L13.8,5.8 L14.6,1.9 L21.4,1.9 L22.2,5.8 L22.2,5.8 L25.5,3.6 L30.4,8.5 L28.2,11.8 Z" fill="none" stroke="#000" stroke-width="4" stroke-linejoin="round"/><path d="M28.2,11.8 L32.1,12.6 L32.1,19.4 L28.2,20.2 L28.2,20.2 L30.4,23.5 L25.5,28.4 L22.2,26.2 L22.2,26.2 L21.4,30.1 L14.6,30.1 L13.8,26.2 L13.8,26.2 L10.5,28.4 L5.6,23.5 L7.8,20.2 L7.8,20.2 L3.9,19.4 L3.9,12.6 L7.8,11.8 L7.8,11.8 L5.6,8.5 L10.5,3.6 L13.8,5.8 L13.8,5.8 L14.6,1.9 L21.4,1.9 L22.2,5.8 L22.2,5.8 L25.5,3.6 L30.4,8.5 L28.2,11.8 Z" fill="#f2f2f2"/><circle cx="18" cy="16" r="4.2" fill="#5a5a5a" stroke="#000" stroke-width="2"/></svg>
<svg style="left:53px;top:57px" width="40" height="36" viewBox="0 0 40 36"><path d="M2,12 L10,34 H38 L30,12 Z" fill="#000"/><path d="M4,14 H28 L32,22 H8 Z" fill="#8a90a8" stroke="#f0f0f0" stroke-width="1.6"/><path d="M6,23 H31 L35,32 H11 Z" fill="#8a90a8" stroke="#f0f0f0" stroke-width="1.6"/><path d="M8,16 L20,3 H35 V15 H22 L18,19 Z" fill="#000" stroke="#000" stroke-width="3"/><path d="M8,16 L20,3 H35 M35,15 H22 L18,19 L8,16" fill="none" stroke="#f0f0f0" stroke-width="1.5"/><path d="M16,14 L21,8 M20,16 L25,10 M24,15 L28,11" stroke="#f0f0f0" stroke-width="1.3"/><rect x="34" y="1" width="5" height="15" fill="#3a64c0"/></svg>
<div class="combo" style="left:97px;top:54px;width:473px;height:40px"></div>
<div class="combo" style="left:572px;top:54px;width:157px;height:40px"></div>
<div class="combo" style="left:732px;top:54px;width:156px;height:40px"></div>
<div class="combo" style="left:890px;top:54px;width:158px;height:40px"></div>
<div class="combo" style="left:1050px;top:54px;width:187px;height:40px"></div>
<div class="combo" style="left:1239px;top:54px;width:158px;height:40px"></div>
<div class="combo" style="left:1407px;top:54px;width:157px;height:40px"></div>
<div class="combo" style="left:1567px;top:54px;width:158px;height:40px"></div>
<div class="a" style="left:897px;top:60px;width:120px;height:28px;background:#6a6a6a"></div>
<div class="a" style="left:1572px;top:60px;width:120px;height:28px;background:#6a6a6a"></div>
<svg style="left:1400px;top:55px" width="3" height="38" viewBox="0 0 3 38"><rect x="0" y="0" width="3" height="38" rx="1" fill="#ececec"/></svg>
<svg style="left:1729px;top:56px" width="40" height="36" viewBox="0 0 40 36"><path d="M2,20 L20,34" stroke="#000" stroke-width="4"/><path d="M2,20 L20,34" stroke="#60c060" stroke-width="1.5"/><path d="M16,24 L34,4 L39,9 L21,29 Z" fill="#e8e8e8" stroke="#000" stroke-width="2"/><path d="M16,24 L21,29 L14,31 Z" fill="#fff" stroke="#000" stroke-width="1.5"/></svg>
<svg style="left:1772px;top:50px" width="48" height="48" viewBox="0 0 48 48"><rect x="1.5" y="1.5" width="45" height="45" fill="#5a5a5a" stroke="#e08a30" stroke-width="3"/><ellipse cx="23" cy="33" rx="17" ry="6" fill="#70d070" stroke="#000" stroke-width="2"/><ellipse cx="23" cy="33" rx="17" ry="6" fill="none" stroke="#fff" stroke-width="1"/><path d="M10,12 H34 L31,32 H13 Z" fill="#60d060" stroke="#000" stroke-width="2"/><path d="M10,12 H34 L31,32 H13 Z" fill="none" stroke="#fff" stroke-width="1"/><ellipse cx="22" cy="12" rx="12" ry="4" fill="#b0f0b0" stroke="#fff" stroke-width="1"/><path d="M34,16 Q40,18 34,26" fill="none" stroke="#000" stroke-width="2"/></svg>
<svg style="left:1818px;top:92px" width="6" height="6" viewBox="0 0 6 6"><path d="M0,6 L6,0 V6 Z" fill="#f0f0f0"/></svg>
<div class="a" style="left:1833px;top:54.0px;width:4px;height:4px;background:#d8d8d8"></div>
<div class="a" style="left:1833px;top:60.4px;width:4px;height:4px;background:#d8d8d8"></div>
<div class="a" style="left:1833px;top:66.8px;width:4px;height:4px;background:#d8d8d8"></div>
<div class="a" style="left:1833px;top:73.2px;width:4px;height:4px;background:#d8d8d8"></div>
<div class="a" style="left:1833px;top:79.6px;width:4px;height:4px;background:#d8d8d8"></div>
<div class="a" style="left:1833px;top:86.0px;width:4px;height:4px;background:#d8d8d8"></div>
<svg style="left:1846px;top:58px" width="36" height="34" viewBox="0 0 36 34"><rect x="0" y="0" width="36" height="34" fill="#dcdcdc"/><rect x="2.0" y="1.5" width="8.0" height="3" fill="#7a7a7a"/><rect x="14.0" y="1.5" width="8.0" height="3" fill="#7a7a7a"/><rect x="26.0" y="1.5" width="8.0" height="3" fill="#7a7a7a"/><rect x="2.0" y="7.1" width="2.0" height="3" fill="#7a7a7a"/><rect x="8.0" y="7.1" width="8.0" height="3" fill="#7a7a7a"/><rect x="20.0" y="7.1" width="8.0" height="3" fill="#7a7a7a"/><rect x="32.0" y="7.1" width="2.0" height="3" fill="#7a7a7a"/><rect x="2.0" y="12.7" width="8.0" height="3" fill="#7a7a7a"/><rect x="14.0" y="12.7" width="8.0" height="3" fill="#7a7a7a"/><rect x="26.0" y="12.7" width="8.0" height="3" fill="#7a7a7a"/><rect x="2.0" y="18.3" width="2.0" height="3" fill="#7a7a7a"/><rect x="8.0" y="18.3" width="8.0" height="3" fill="#7a7a7a"/><rect x="20.0" y="18.3" width="8.0" height="3" fill="#7a7a7a"/><rect x="32.0" y="18.3" width="2.0" height="3" fill="#7a7a7a"/><rect x="2.0" y="23.9" width="8.0" height="3" fill="#7a7a7a"/><rect x="14.0" y="23.9" width="8.0" height="3" fill="#7a7a7a"/><rect x="26.0" y="23.9" width="8.0" height="3" fill="#7a7a7a"/><rect x="2.0" y="29.5" width="2.0" height="3" fill="#7a7a7a"/><rect x="8.0" y="29.5" width="8.0" height="3" fill="#7a7a7a"/><rect x="20.0" y="29.5" width="8.0" height="3" fill="#7a7a7a"/><rect x="32.0" y="29.5" width="2.0" height="3" fill="#7a7a7a"/><rect x="0" y="33" width="36" height="1" fill="#8a8a8a"/></svg>
<svg style="left:2792px;top:5px" width="30" height="29" viewBox="0 0 30 29"><circle cx="15" cy="14.5" r="12.5" fill="none" stroke="#b8b8b8" stroke-width="2.6"/><path d="M8,22 V8 L15,16 L22,8 V22" fill="none" stroke="#b8b8b8" stroke-width="2.6"/></svg>
<div class="a" style="left:2828px;top:10px;font-size:20px;line-height:1;color:#d4d4d4;white-space:nowrap;letter-spacing:0.9px">www.MacDown.com</div><div class="a" style="left:3px;top:111px;width:4px;height:3px;background:#c8c8c8"></div>
<div class="a" style="left:9px;top:111px;width:4px;height:3px;background:#c8c8c8"></div>
<div class="a" style="left:15px;top:111px;width:4px;height:3px;background:#c8c8c8"></div>
<div class="a" style="left:21px;top:111px;width:4px;height:3px;background:#c8c8c8"></div>
<div class="a" style="left:27px;top:111px;width:4px;height:3px;background:#c8c8c8"></div>
<div class="a" style="left:33px;top:111px;width:4px;height:3px;background:#c8c8c8"></div>
<div class="a" style="left:0px;top:117px;width:34px;height:50px;border:3px solid #e0802a;border-left:none;background:linear-gradient(90deg,#505050,#7a7a7a)"></div>
<svg style="left:2px;top:124px" width="30" height="38" viewBox="0 0 30 38"><path d="M3,2 L3,30 L10,24 L15,35 L21,32 L16,21 L26,21 Z" fill="#fff" stroke="#000" stroke-width="2.5"/></svg>
<svg style="left:1px;top:170px" width="30" height="40" viewBox="0 0 30 40"><path d="M8,14 L8,34 L13,29 L17,37 L21,35 L17,27 L24,27 Z" fill="#fff" stroke="#000" stroke-width="2"/><rect x="0" y="1" width="10" height="9" fill="#4a9ae8" stroke="#000" stroke-width="1.2"/><path d="M6,8 L18,-2" stroke="#4a9ae8" stroke-width="2"/></svg>
<svg style="left:1px;top:218px" width="34" height="36" viewBox="0 0 34 36"><path d="M2,34 L12,24 L22,14 L32,4" fill="none" stroke="#f0f0f0" stroke-width="1.5" stroke-dasharray="3 2"/><rect x="0" y="26" width="6" height="6" fill="#5a8ad0" stroke="#fff" stroke-width="1"/><rect x="16" y="9" width="6" height="6" fill="#5a8ad0" stroke="#fff" stroke-width="1"/></svg>
<svg style="left:0px;top:268px" width="30" height="38" viewBox="0 0 30 38"><path d="M0,34 L26,6" stroke="#000" stroke-width="4"/><path d="M0,34 L26,6" stroke="#f0f0f0" stroke-width="1.5"/><rect x="21" y="1" width="7" height="7" fill="#4a8ad0" stroke="#000" stroke-width="1.2"/></svg>
<svg style="left:0px;top:315px" width="32" height="38" viewBox="0 0 32 38"><circle cx="14" cy="18" r="15" fill="none" stroke="#f0f0f0" stroke-width="1.8"/><rect x="9" y="14" width="6" height="6" fill="#4a8ad0" stroke="#000"/><rect x="23" y="14" width="6" height="6" fill="#4a8ad0" stroke="#000"/></svg>
<svg style="left:0px;top:366px" width="32" height="36" viewBox="0 0 32 36"><path d="M0,20 Q12,-4 24,26" fill="none" stroke="#f0f0f0" stroke-width="1.8" stroke-dasharray="3 1.5"/><rect x="18" y="1" width="6" height="6" fill="#7a8ad0" stroke="#fff" stroke-width=".8"/><rect x="23" y="24" width="6" height="6" fill="#7a8ad0" stroke="#fff" stroke-width=".8"/></svg>
<svg style="left:4px;top:420px" width="16" height="16" viewBox="0 0 16 16"><path d="M8,2 V14 M2,8 H14" stroke="#000" stroke-width="6"/><path d="M8,3 V13 M3,8 H13" stroke="#fff" stroke-width="3"/></svg>
<svg style="left:0px;top:459px" width="30" height="36" viewBox="0 0 30 36"><path d="M1,34 L13,2 H17 L29,34 H22 L19,25 H11 L8,34 Z M13,19 H17 L15,12 Z" fill="#fff" stroke="#000" stroke-width="1.5"/></svg>
<svg style="left:0px;top:505px" width="34" height="38" viewBox="0 0 34 38"><rect x="1" y="3" width="16" height="12" fill="#e02020" stroke="#fff" stroke-width="1.5"/><path d="M17,3 Q24,6 22,14" fill="none" stroke="#d02020" stroke-width="2.5"/><rect x="6" y="17" width="26" height="18" fill="#58a8f0" stroke="#000" stroke-width="1.5"/><path d="M10,32 L24,18" stroke="#2a5aa0" stroke-width="1.5"/></svg>
<svg style="left:2px;top:553px" width="30" height="3" viewBox="0 0 30 3"><rect x="0" y="0" width="30" height="3" rx="1" fill="#e8e8e8"/></svg>
<svg style="left:0px;top:563px" width="32" height="38" viewBox="0 0 32 38"><ellipse cx="12" cy="18" rx="13" ry="10" fill="none" stroke="#f0f0f0" stroke-width="1.8"/><path d="M12,8 L26,18 L12,28" fill="none" stroke="#4a8ad0" stroke-width="1.5"/><rect x="9" y="3" width="6" height="6" fill="#4a8ad0" stroke="#fff" stroke-width=".8"/><rect x="23" y="15" width="6" height="6" fill="#4a8ad0" stroke="#fff" stroke-width=".8"/><rect x="9" y="27" width="6" height="6" fill="#4a8ad0" stroke="#fff" stroke-width=".8"/><text x="0" y="23" font-family="Liberation Sans" font-size="11" fill="#fff" font-weight="bold">3D</text></svg>
<svg style="left:0px;top:612px" width="32" height="34" viewBox="0 0 32 34"><path d="M0,10 L6,4 H28 V24 L22,30 H0 Z" fill="#666" stroke="#fff" stroke-width="2.5"/><path d="M0,10 H22 V30 M22,10 L28,4" fill="none" stroke="#fff" stroke-width="2"/><rect x="24" y="0" width="6" height="6" fill="#4a8ad0"/></svg>
<svg style="left:1px;top:663px" width="32" height="32" viewBox="0 0 32 32"><path d="M4,8 L24,4 L30,20 L12,28 Z" fill="#aab8d0" stroke="#fff" stroke-width="2"/><ellipse cx="14" cy="8" rx="11" ry="5" fill="#dde" stroke="#fff" stroke-width="1.5"/><rect x="4" y="22" width="6" height="6" fill="#4a8ad0" stroke="#fff"/></svg>
<svg style="left:2px;top:707px" width="30" height="3" viewBox="0 0 30 3"><rect x="0" y="0" width="30" height="3" rx="1" fill="#e8e8e8"/></svg>
<svg style="left:1px;top:718px" width="34" height="38" viewBox="0 0 34 38"><path d="M0,4 H32 M0,32 H32" stroke="#fff" stroke-width="2.5"/><path d="M16,6 V30 M4,18 H30" stroke="#fff" stroke-width="1.8" stroke-dasharray="3 2"/><path d="M11,11 L16,6 L21,11 M11,25 L16,30 L21,25 M26,13 L31,18 L26,23" fill="none" stroke="#fff" stroke-width="2"/></svg>
<svg style="left:2px;top:763px" width="30" height="3" viewBox="0 0 30 3"><rect x="0" y="0" width="30" height="3" rx="1" fill="#e8e8e8"/></svg>
<svg style="left:0px;top:774px" width="24" height="38" viewBox="0 0 24 38"><path d="M0,10 L22,2 V28 L0,36 Z" fill="#e8e860" stroke="#000" stroke-width="2"/><path d="M11,6 V32 M0,23 L22,15" stroke="#000" stroke-width="1.5"/></svg>
<svg style="left:-3px;top:828px" width="32" height="34" viewBox="0 0 32 34"><path d="M25.1,11.9 L29.7,13.2 L29.7,18.8 L25.1,20.1 L25.3,19.6 L27.7,23.7 L23.7,27.7 L19.6,25.3 L20.1,25.1 L18.8,29.7 L13.2,29.7 L11.9,25.1 L12.4,25.3 L8.3,27.7 L4.3,23.7 L6.7,19.6 L6.9,20.1 L2.3,18.8 L2.3,13.2 L6.9,11.9 L6.7,12.4 L4.3,8.3 L8.3,4.3 L12.4,6.7 L11.9,6.9 L13.2,2.3 L18.8,2.3 L20.1,6.9 L19.6,6.7 L23.7,4.3 L27.7,8.3 L25.3,12.4 Z" fill="#40c0f0" stroke="#fff" stroke-width="1"/><circle cx="16" cy="16" r="5" fill="#777"/></svg>
<svg style="left:2px;top:870px" width="30" height="3" viewBox="0 0 30 3"><rect x="0" y="0" width="30" height="3" rx="1" fill="#e8e8e8"/></svg>
<svg style="left:-5px;top:881px" width="36" height="36" viewBox="0 0 36 36"><rect x="1" y="2" width="34" height="32" fill="#e8e8f0" stroke="#000" stroke-width="2"/><rect x="1" y="2" width="34" height="6" fill="#88a0d0"/><rect x="9" y="13" width="11" height="10" fill="none" stroke="#000" stroke-width="2"/><rect x="15" y="18" width="11" height="10" fill="none" stroke="#000" stroke-width="2"/><rect x="4" y="11" width="4" height="4" fill="#2050b0"/><rect x="28" y="11" width="4" height="4" fill="#2050b0"/><rect x="4" y="27" width="4" height="4" fill="#2050b0"/><rect x="28" y="27" width="4" height="4" fill="#2050b0"/></svg>
<svg style="left:0px;top:929px" width="34" height="38" viewBox="0 0 34 38"><path d="M-4,2 H12 V12 L6,18 H-4" fill="none" stroke="#d0d0d0" stroke-width="2"/><path d="M12,16 H24 V28 H12 Z" fill="#777" stroke="#d8d8d8" stroke-width="2"/><path d="M8,14 H28 V30 H8 Z" fill="none" stroke="#bbb" stroke-width="1.5" stroke-dasharray="3 2"/><rect x="8" y="12" width="4" height="4" fill="none" stroke="#eee" stroke-width="1.2"/><rect x="26" y="12" width="4" height="4" fill="none" stroke="#eee" stroke-width="1.2"/><rect x="4" y="32" width="4" height="4" fill="none" stroke="#eee" stroke-width="1.2"/></svg>
<svg style="left:-2px;top:978px" width="34" height="36" viewBox="0 0 34 36"><rect x="0" y="1" width="9" height="11" rx="1" fill="#777" stroke="#ccc" stroke-width="1.6"/><path d="M0,15 H9" stroke="#ccc" stroke-width="1.6"/><rect x="13" y="1" width="9" height="11" rx="1" fill="#777" stroke="#ccc" stroke-width="1.6"/><path d="M13,15 H22" stroke="#ccc" stroke-width="1.6"/><rect x="0" y="18" width="9" height="11" rx="1" fill="#777" stroke="#ccc" stroke-width="1.6"/><path d="M0,32 H9" stroke="#ccc" stroke-width="1.6"/><rect x="13" y="18" width="9" height="11" rx="1" fill="#777" stroke="#ccc" stroke-width="1.6"/><path d="M13,32 H22" stroke="#ccc" stroke-width="1.6"/></svg>
<svg style="left:2px;top:1022px" width="30" height="3" viewBox="0 0 30 3"><rect x="0" y="0" width="30" height="3" rx="1" fill="#e8e8e8"/></svg>
<svg style="left:0px;top:1033px" width="34" height="38" viewBox="0 0 34 38"><rect x="2" y="14" width="26" height="22" fill="#9a9a9a" stroke="#000" stroke-width="2.5"/><rect x="2" y="14" width="26" height="22" fill="none" stroke="#eee" stroke-width="1.2"/><circle cx="15" cy="25" r="8" fill="#ccc" stroke="#eee" stroke-width="1.5"/><path d="M15,17 V33 M7,25 H23" stroke="#888" stroke-width="1.5"/><path d="M0,6 L10,14 M10,2 L4,14 M0,12 L12,8" stroke="#e8e860" stroke-width="2"/><circle cx="7" cy="10" r="3" fill="#e8e860"/></svg>
<svg style="left:28px;top:253px" width="7" height="7" viewBox="0 0 7 7"><path d="M0,7 L7,0 V7 Z" fill="#f0f0f0"/></svg>
<svg style="left:28px;top:301px" width="7" height="7" viewBox="0 0 7 7"><path d="M0,7 L7,0 V7 Z" fill="#f0f0f0"/></svg>
<svg style="left:28px;top:350px" width="7" height="7" viewBox="0 0 7 7"><path d="M0,7 L7,0 V7 Z" fill="#f0f0f0"/></svg>
<svg style="left:28px;top:399px" width="7" height="7" viewBox="0 0 7 7"><path d="M0,7 L7,0 V7 Z" fill="#f0f0f0"/></svg>
<svg style="left:28px;top:444px" width="7" height="7" viewBox="0 0 7 7"><path d="M0,7 L7,0 V7 Z" fill="#f0f0f0"/></svg>
<svg style="left:28px;top:492px" width="7" height="7" viewBox="0 0 7 7"><path d="M0,7 L7,0 V7 Z" fill="#f0f0f0"/></svg>
<svg style="left:28px;top:541px" width="7" height="7" viewBox="0 0 7 7"><path d="M0,7 L7,0 V7 Z" fill="#f0f0f0"/></svg>
<svg style="left:28px;top:588px" width="7" height="7" viewBox="0 0 7 7"><path d="M0,7 L7,0 V7 Z" fill="#f0f0f0"/></svg>
<svg style="left:28px;top:645px" width="7" height="7" viewBox="0 0 7 7"><path d="M0,7 L7,0 V7 Z" fill="#f0f0f0"/></svg>
<svg style="left:28px;top:694px" width="7" height="7" viewBox="0 0 7 7"><path d="M0,7 L7,0 V7 Z" fill="#f0f0f0"/></svg>
<svg style="left:28px;top:857px" width="7" height="7" viewBox="0 0 7 7"><path d="M0,7 L7,0 V7 Z" fill="#f0f0f0"/></svg>
<svg style="left:28px;top:915px" width="7" height="7" viewBox="0 0 7 7"><path d="M0,7 L7,0 V7 Z" fill="#f0f0f0"/></svg>
<svg style="left:28px;top:963px" width="7" height="7" viewBox="0 0 7 7"><path d="M0,7 L7,0 V7 Z" fill="#f0f0f0"/></svg>
<svg style="left:28px;top:1010px" width="7" height="7" viewBox="0 0 7 7"><path d="M0,7 L7,0 V7 Z" fill="#f0f0f0"/></svg>
<svg style="left:28px;top:1068px" width="7" height="7" viewBox="0 0 7 7"><path d="M0,7 L7,0 V7 Z" fill="#f0f0f0"/></svg>
<svg style="left:43px;top:106px" width="18" height="19" viewBox="0 0 18 19"><path d="M5,17 V3 M2,6 L5,2 L8,6 M5,14 H16 M13,11 L17,14 L13,17" fill="none" stroke="#111" stroke-width="1.6"/></svg><div class="a" style="left:65px;top:127px;width:920px;height:85px;background:#2a2a2a;border:2px solid #9a9a9a;border-right-color:#111;border-bottom-color:#111"></div>
<div class="a" style="left:69px;top:131px;width:914px;height:78px;background:linear-gradient(#3a3a3a,#6a6a6a 60%,#8e8e8e)"></div>
<div class="a" style="left:71px;top:133px;width:911px;height:25px;background:#000"></div>
<div class="a" style="left:75px;top:136px;font-size:19px;line-height:1;color:#c4c4c4;white-space:nowrap;">House Wizard</div>
<svg style="left:961px;top:140px" width="15" height="13" viewBox="0 0 15 13"><path d="M2,2 L13,11 M13,2 L2,11" stroke="#e0e0e0" stroke-width="2.6"/></svg>
<svg style="left:81px;top:171px" width="32" height="32" viewBox="0 0 32 32"><path d="M10,24 L24,6 L30,10 L16,28 Z" fill="#8a8a8a" stroke="#ddd" stroke-width="1.8"/><path d="M24,2 L30,2 M27,-1 V5" stroke="#ccc" stroke-width="1.2"/><rect x="2" y="20" width="11" height="10" fill="none" stroke="#e0e0e0" stroke-width="1.6"/><path d="M4,25 H11" stroke="#e0e0e0"/></svg>
<svg style="left:125px;top:171px" width="32" height="32" viewBox="0 0 32 32"><rect x="12" y="2" width="18" height="14" fill="#777" stroke="#e8e8e8" stroke-width="1.6"/><rect x="15" y="5" width="6" height="6" fill="#bbb"/><rect x="6" y="20" width="11" height="10" fill="none" stroke="#e0e0e0" stroke-width="1.6"/><rect x="0" y="28" width="4" height="4" fill="none" stroke="#e8e8e8" stroke-width="1.2"/></svg>
<svg style="left:172px;top:169px" width="38" height="34" viewBox="0 0 38 34"><rect x="4" y="14" width="14" height="14" fill="#777" stroke="#f0f0f0" stroke-width="2"/><rect x="8" y="18" width="6" height="6" fill="#bbb"/><path d="M16,16 L28,4 L36,10 L24,22 Z" fill="#8a8a8a" stroke="#ccc" stroke-width="1.6" stroke-dasharray="2 1"/><rect x="0" y="29" width="4" height="4" fill="none" stroke="#e8e8e8" stroke-width="1.2"/></svg>
<svg style="left:221px;top:171px" width="32" height="32" viewBox="0 0 32 32"><rect x="4" y="6" width="26" height="24" fill="#888" stroke="#ccc" stroke-width="1.6"/><path d="M4,6 L30,30 M30,6 L4,30" stroke="#bbb" stroke-width="2"/><rect x="0" y="28" width="4" height="4" fill="none" stroke="#e8e8e8" stroke-width="1.2"/></svg>
<svg style="left:270px;top:171px" width="36" height="34" viewBox="0 0 36 34"><path d="M3,1 H32 V20 H21 V23 H3 Z" fill="#3c3c3c" stroke="#e4e4e4" stroke-width="2" stroke-dasharray="2.2 .6"/><text x="17.5" y="19" text-anchor="middle" font-family="Liberation Sans" font-size="20" fill="#f2f2f2" textLength="26" lengthAdjust="spacingAndGlyphs">Bed</text><rect x="-2" y="27" width="5" height="5" fill="none" stroke="#e0e0e0" stroke-width="1.5"/><path d="M26,27 L32,21" stroke="#a8a8a8" stroke-width="1.2" opacity=".6"/></svg>
<svg style="left:318px;top:171px" width="36" height="34" viewBox="0 0 36 34"><path d="M3,1 H32 V20 H21 V23 H3 Z" fill="#3c3c3c" stroke="#e4e4e4" stroke-width="2" stroke-dasharray="2.2 .6"/><text x="17.5" y="19" text-anchor="middle" font-family="Liberation Sans" font-size="20" fill="#f2f2f2" textLength="26" lengthAdjust="spacingAndGlyphs">MBed</text><rect x="-2" y="27" width="5" height="5" fill="none" stroke="#e0e0e0" stroke-width="1.5"/><path d="M26,27 L32,21" stroke="#a8a8a8" stroke-width="1.2" opacity=".6"/></svg>
<svg style="left:366px;top:171px" width="36" height="34" viewBox="0 0 36 34"><path d="M3,1 H32 V20 H21 V23 H3 Z" fill="#3c3c3c" stroke="#e4e4e4" stroke-width="2" stroke-dasharray="2.2 .6"/><text x="17.5" y="19" text-anchor="middle" font-family="Liberation Sans" font-size="20" fill="#f2f2f2" textLength="26" lengthAdjust="spacingAndGlyphs">Office</text><rect x="-2" y="27" width="5" height="5" fill="none" stroke="#e0e0e0" stroke-width="1.5"/><path d="M26,27 L32,21" stroke="#a8a8a8" stroke-width="1.2" opacity=".6"/></svg>
<svg style="left:414px;top:171px" width="36" height="34" viewBox="0 0 36 34"><path d="M3,1 H32 V20 H21 V23 H3 Z" fill="#3c3c3c" stroke="#e4e4e4" stroke-width="2" stroke-dasharray="2.2 .6"/><text x="17.5" y="19" text-anchor="middle" font-family="Liberation Sans" font-size="20" fill="#f2f2f2" textLength="26" lengthAdjust="spacingAndGlyphs">Bath</text><rect x="-2" y="27" width="5" height="5" fill="none" stroke="#e0e0e0" stroke-width="1.5"/><path d="M26,27 L32,21" stroke="#a8a8a8" stroke-width="1.2" opacity=".6"/></svg>
<svg style="left:461px;top:171px" width="36" height="34" viewBox="0 0 36 34"><path d="M3,1 H32 V20 H21 V23 H3 Z" fill="#3c3c3c" stroke="#e4e4e4" stroke-width="2" stroke-dasharray="2.2 .6"/><text x="17.5" y="19" text-anchor="middle" font-family="Liberation Sans" font-size="20" fill="#f2f2f2" textLength="26" lengthAdjust="spacingAndGlyphs">Laun</text><rect x="-2" y="27" width="5" height="5" fill="none" stroke="#e0e0e0" stroke-width="1.5"/><path d="M26,27 L32,21" stroke="#a8a8a8" stroke-width="1.2" opacity=".6"/></svg>
<svg style="left:509px;top:171px" width="36" height="34" viewBox="0 0 36 34"><path d="M3,1 H32 V20 H21 V23 H3 Z" fill="#3c3c3c" stroke="#e4e4e4" stroke-width="2" stroke-dasharray="2.2 .6"/><text x="17.5" y="19" text-anchor="middle" font-family="Liberation Sans" font-size="20" fill="#f2f2f2" textLength="26" lengthAdjust="spacingAndGlyphs">Gar</text><rect x="-2" y="27" width="5" height="5" fill="none" stroke="#e0e0e0" stroke-width="1.5"/><path d="M26,27 L32,21" stroke="#a8a8a8" stroke-width="1.2" opacity=".6"/></svg>
<svg style="left:557px;top:171px" width="36" height="34" viewBox="0 0 36 34"><path d="M3,1 H32 V20 H21 V23 H3 Z" fill="#3c3c3c" stroke="#e4e4e4" stroke-width="2" stroke-dasharray="2.2 .6"/><text x="17.5" y="19" text-anchor="middle" font-family="Liberation Sans" font-size="20" fill="#f2f2f2" textLength="26" lengthAdjust="spacingAndGlyphs">Liv</text><rect x="-2" y="27" width="5" height="5" fill="none" stroke="#e0e0e0" stroke-width="1.5"/><path d="M26,27 L32,21" stroke="#a8a8a8" stroke-width="1.2" opacity=".6"/></svg>
<svg style="left:605px;top:171px" width="36" height="34" viewBox="0 0 36 34"><path d="M3,1 H32 V20 H21 V23 H3 Z" fill="#3c3c3c" stroke="#e4e4e4" stroke-width="2" stroke-dasharray="2.2 .6"/><text x="17.5" y="19" text-anchor="middle" font-family="Liberation Sans" font-size="20" fill="#f2f2f2" textLength="26" lengthAdjust="spacingAndGlyphs">Fam</text><rect x="-2" y="27" width="5" height="5" fill="none" stroke="#e0e0e0" stroke-width="1.5"/><path d="M26,27 L32,21" stroke="#a8a8a8" stroke-width="1.2" opacity=".6"/></svg>
<svg style="left:653px;top:171px" width="36" height="34" viewBox="0 0 36 34"><path d="M3,1 H32 V20 H21 V23 H3 Z" fill="#3c3c3c" stroke="#e4e4e4" stroke-width="2" stroke-dasharray="2.2 .6"/><text x="17.5" y="19" text-anchor="middle" font-family="Liberation Sans" font-size="20" fill="#f2f2f2" textLength="26" lengthAdjust="spacingAndGlyphs">Dine</text><rect x="-2" y="27" width="5" height="5" fill="none" stroke="#e0e0e0" stroke-width="1.5"/><path d="M26,27 L32,21" stroke="#a8a8a8" stroke-width="1.2" opacity=".6"/></svg>
<svg style="left:701px;top:171px" width="36" height="34" viewBox="0 0 36 34"><path d="M3,1 H32 V20 H21 V23 H3 Z" fill="#3c3c3c" stroke="#e4e4e4" stroke-width="2" stroke-dasharray="2.2 .6"/><text x="17.5" y="19" text-anchor="middle" font-family="Liberation Sans" font-size="20" fill="#f2f2f2" textLength="26" lengthAdjust="spacingAndGlyphs">Kitch</text><rect x="-2" y="27" width="5" height="5" fill="none" stroke="#e0e0e0" stroke-width="1.5"/><path d="M26,27 L32,21" stroke="#a8a8a8" stroke-width="1.2" opacity=".6"/></svg>
<svg style="left:748px;top:171px" width="36" height="34" viewBox="0 0 36 34"><path d="M3,1 H32 V20 H21 V23 H3 Z" fill="#3c3c3c" stroke="#e4e4e4" stroke-width="2" stroke-dasharray="2.2 .6"/><text x="17.5" y="19" text-anchor="middle" font-family="Liberation Sans" font-size="20" fill="#f2f2f2" textLength="26" lengthAdjust="spacingAndGlyphs">Entry</text><rect x="-2" y="27" width="5" height="5" fill="none" stroke="#e0e0e0" stroke-width="1.5"/><path d="M26,27 L32,21" stroke="#a8a8a8" stroke-width="1.2" opacity=".6"/></svg>
<svg style="left:796px;top:171px" width="36" height="34" viewBox="0 0 36 34"><path d="M3,1 H32 V20 H21 V23 H3 Z" fill="#3c3c3c" stroke="#e4e4e4" stroke-width="2" stroke-dasharray="2.2 .6"/><text x="17.5" y="19" text-anchor="middle" font-family="Liberation Sans" font-size="20" fill="#f2f2f2" textLength="26" lengthAdjust="spacingAndGlyphs">Clst</text><rect x="-2" y="27" width="5" height="5" fill="none" stroke="#e0e0e0" stroke-width="1.5"/><path d="M26,27 L32,21" stroke="#a8a8a8" stroke-width="1.2" opacity=".6"/></svg>
<svg style="left:844px;top:171px" width="36" height="34" viewBox="0 0 36 34"><path d="M3,1 H32 V20 H21 V23 H3 Z" fill="#3c3c3c" stroke="#e4e4e4" stroke-width="2" stroke-dasharray="2.2 .6"/><text x="17.5" y="19" text-anchor="middle" font-family="Liberation Sans" font-size="20" fill="#f2f2f2" textLength="26" lengthAdjust="spacingAndGlyphs">Hall</text><rect x="-2" y="27" width="5" height="5" fill="none" stroke="#e0e0e0" stroke-width="1.5"/><path d="M26,27 L32,21" stroke="#a8a8a8" stroke-width="1.2" opacity=".6"/></svg>
<svg style="left:892px;top:171px" width="36" height="34" viewBox="0 0 36 34"><path d="M3,1 H32 V20 H21 V23 H3 Z" fill="#3c3c3c" stroke="#e4e4e4" stroke-width="2" stroke-dasharray="2.2 .6"/><text x="17.5" y="19" text-anchor="middle" font-family="Liberation Sans" font-size="20" fill="#f2f2f2" textLength="26" lengthAdjust="spacingAndGlyphs">Deck</text><rect x="-2" y="27" width="5" height="5" fill="none" stroke="#e0e0e0" stroke-width="1.5"/><path d="M26,27 L32,21" stroke="#a8a8a8" stroke-width="1.2" opacity=".6"/></svg>
<svg style="left:940px;top:167px" width="38" height="38" viewBox="0 0 38 38"><path d="M6,18 L20,4 H36 V16 H24 L20,20 Z" fill="#9a9a9a" stroke="#e8e8e8" stroke-width="1.8"/><path d="M14,16 L18,11 M18,18 L22,13" stroke="#eee" stroke-width="1.3"/><rect x="6" y="24" width="14" height="8" fill="none" stroke="#e0e0e0" stroke-width="1.6"/><rect x="0" y="32" width="4" height="4" fill="none" stroke="#e8e8e8" stroke-width="1.2"/></svg>
<div class="a" style="left:35px;top:770px;width:148px;height:236px;background:#1e1e1e;border:2px solid #888;border-right-color:#0a0a0a;border-bottom-color:#0a0a0a"></div>
<div class="a" style="left:38px;top:773px;width:143px;height:12px;background:#3a3a3a"></div>
<div class="a" style="left:57.0px;top:777px;width:4px;height:4px;background:#c8c8c8"></div>
<div class="a" style="left:63.8px;top:777px;width:4px;height:4px;background:#c8c8c8"></div>
<div class="a" style="left:70.6px;top:777px;width:4px;height:4px;background:#c8c8c8"></div>
<div class="a" style="left:77.4px;top:777px;width:4px;height:4px;background:#c8c8c8"></div>
<div class="a" style="left:84.2px;top:777px;width:4px;height:4px;background:#c8c8c8"></div>
<div class="a" style="left:91.0px;top:777px;width:4px;height:4px;background:#c8c8c8"></div>
<div class="a" style="left:97.8px;top:777px;width:4px;height:4px;background:#c8c8c8"></div>
<div class="a" style="left:104.6px;top:777px;width:4px;height:4px;background:#c8c8c8"></div>
<div class="a" style="left:111.4px;top:777px;width:4px;height:4px;background:#c8c8c8"></div>
<div class="a" style="left:118.19999999999999px;top:777px;width:4px;height:4px;background:#c8c8c8"></div>
<div class="a" style="left:125.0px;top:777px;width:4px;height:4px;background:#c8c8c8"></div>
<div class="a" style="left:131.8px;top:777px;width:4px;height:4px;background:#c8c8c8"></div>
<div class="a" style="left:138.6px;top:777px;width:4px;height:4px;background:#c8c8c8"></div>
<div class="a" style="left:145.39999999999998px;top:777px;width:4px;height:4px;background:#c8c8c8"></div>
<div class="a" style="left:152.2px;top:777px;width:4px;height:4px;background:#c8c8c8"></div>
<div class="a" style="left:159.0px;top:777px;width:4px;height:4px;background:#c8c8c8"></div>
<div class="a" style="left:38px;top:785px;width:143px;height:57px;background:linear-gradient(90deg,#3e3e3e,#5e5e5e 60%,#787878)"></div>
<div class="a" style="left:38px;top:842px;width:143px;height:2px;background:#a8a8a8"></div>
<div class="a" style="left:38px;top:844px;width:143px;height:56px;background:linear-gradient(90deg,#3e3e3e,#5e5e5e 60%,#787878)"></div>
<div class="a" style="left:38px;top:900px;width:143px;height:2px;background:#a8a8a8"></div>
<div class="a" style="left:38px;top:902px;width:143px;height:102px;background:linear-gradient(90deg,#3e3e3e,#5e5e5e 60%,#787878)"></div>
<svg style="left:47px;top:798px" width="28" height="36" viewBox="0 0 28 36"><path d="M6,8 L16,2 L24,8 V28 L14,34 L6,28 Z" fill="#f0f0f0" stroke="#000" stroke-width="2"/><path d="M16,2 V10 L24,8 M16,10 L6,14" fill="none" stroke="#888" stroke-width="1"/><path d="M6,28 L14,34 L24,28" fill="none" stroke="#5050b0" stroke-width="2"/></svg>
<svg style="left:46px;top:858px" width="28" height="22" viewBox="0 0 28 22"><path d="M2,16 L14,4 L26,12 L14,20 Z" fill="#e8e8c8" stroke="#000" stroke-width="2"/><path d="M14,4 V20" stroke="#888"/></svg>
<svg style="left:89px;top:856px" width="32" height="38" viewBox="-4 -2 30 42"><path d="M0,10 L22,2 V28 L0,36 Z" fill="#e8e860" stroke="#000" stroke-width="2"/><path d="M11,6 V32 M0,23 L22,15" stroke="#000" stroke-width="1.5"/></svg>
<svg style="left:141px;top:855px" width="28" height="38" viewBox="0 0 28 38"><path d="M4,4 L22,2 V34 L4,36 Z" fill="#f0f0f0" stroke="#000" stroke-width="2"/><path d="M8,6 L24,4 V34 L8,36 Z" fill="#d8d860" stroke="#000" stroke-width="2"/></svg>
<svg style="left:41px;top:910px" width="40" height="38" viewBox="0 0 40 38"><rect x="2" y="2" width="36" height="34" fill="none" stroke="#cfcfcf" stroke-width="2"/><path d="M11,2 V36" stroke="#cfcfcf" stroke-width="1.6"/><path d="M20,2 V36" stroke="#cfcfcf" stroke-width="1.6"/><path d="M29,2 V36" stroke="#cfcfcf" stroke-width="1.6"/><path d="M2,10 H38" stroke="#cfcfcf" stroke-width="1.6"/><path d="M2,19 H38" stroke="#cfcfcf" stroke-width="1.6"/><path d="M2,27 H38" stroke="#cfcfcf" stroke-width="1.6"/></svg>
<svg style="left:89px;top:910px" width="40" height="38" viewBox="0 0 40 38"><rect x="2" y="10" width="36" height="26" fill="none" stroke="#cfcfcf" stroke-width="2"/><path d="M11,10 V36" stroke="#cfcfcf" stroke-width="1.6"/><path d="M20,10 V36" stroke="#cfcfcf" stroke-width="1.6"/><path d="M29,10 V36" stroke="#cfcfcf" stroke-width="1.6"/><path d="M2,19 H38" stroke="#cfcfcf" stroke-width="1.6"/><path d="M2,28 H38" stroke="#cfcfcf" stroke-width="1.6"/><path d="M14,0 V10 M9,5 H19" stroke="#d8d8d8" stroke-width="3"/></svg>
<svg style="left:136px;top:910px" width="40" height="38" viewBox="0 0 40 38"><rect x="2" y="10" width="36" height="26" fill="none" stroke="#cfcfcf" stroke-width="2"/><path d="M11,10 V36" stroke="#cfcfcf" stroke-width="1.6"/><path d="M20,10 V36" stroke="#cfcfcf" stroke-width="1.6"/><path d="M29,10 V36" stroke="#cfcfcf" stroke-width="1.6"/><path d="M2,19 H38" stroke="#cfcfcf" stroke-width="1.6"/><path d="M2,28 H38" stroke="#cfcfcf" stroke-width="1.6"/><path d="M10,4 H22" stroke="#d8d8d8" stroke-width="3"/></svg>
<svg style="left:41px;top:959px" width="40" height="38" viewBox="0 0 40 38"><rect x="2" y="18" width="22" height="16" fill="none" stroke="#cfcfcf" stroke-width="2"/><path d="M9,18 V34 M16,18 V34 M2,26 H24" stroke="#cfcfcf" stroke-width="1.5"/><path d="M18,20 L32,6 L36,10 L22,24" fill="#999" stroke="#ccc" stroke-width="1.5" stroke-dasharray="2 1"/></svg>
<svg style="left:8px;top:789px" width="34" height="48" viewBox="0 0 34 48"><path d="M3,2 L3,37 L12,29 L18,44 L25,41 L19,27 L31,27 Z" fill="#fff" stroke="#000" stroke-width="2.8"/></svg><div class="a" style="left:2964px;top:106px;width:29px;height:37px;background:linear-gradient(90deg,#5a5a5a,#c8c8c8 45%,#8a8a8a);border-radius:3px;border:1px solid #222"></div>
<svg style="left:2966px;top:112px" width="24" height="24" viewBox="0 0 24 24"><path d="M2,4 H18 L22,8 V22 H2 Z" fill="#fff" stroke="#000" stroke-width="2"/><path d="M4,12 L11,5 L18,12" fill="none" stroke="#000" stroke-width="1.5"/><path d="M11,3 H22 V8" fill="#000"/><path d="M5,17 H18" stroke="#888"/></svg>
<div class="a" style="left:2964px;top:145px;width:29px;height:37px;background:linear-gradient(90deg,#5a5a5a,#c8c8c8 45%,#8a8a8a);border-radius:3px;border:1px solid #222"></div>
<svg style="left:2966px;top:151px" width="24" height="24" viewBox="0 0 24 24"><rect x="2" y="2" width="20" height="20" fill="#fff" stroke="#000" stroke-width="2"/><rect x="7" y="7" width="7" height="7" fill="none" stroke="#000" stroke-width="1.8"/><rect x="10" y="10" width="7" height="7" fill="none" stroke="#000" stroke-width="1.8"/><circle cx="5" cy="5" r="1.5"/><circle cx="19" cy="5" r="1.5"/><circle cx="5" cy="19" r="1.5"/><circle cx="19" cy="19" r="1.5"/></svg>
<div class="a" style="left:2964px;top:183px;width:29px;height:36px;background:linear-gradient(90deg,#5a5a5a,#c8c8c8 45%,#8a8a8a);border-radius:3px;border:1px solid #222"></div>
<svg style="left:2966px;top:189px" width="24" height="24" viewBox="0 0 24 24"><rect x="2" y="2" width="20" height="20" fill="#555"/><circle cx="12" cy="13" r="7" fill="#3030c0"/><circle cx="10" cy="11" r="3" fill="#a0a0f0"/><rect x="2" y="19" width="20" height="3" fill="#ddd"/></svg>
<div class="a" style="left:2963px;top:221px;width:31px;height:178px;background:linear-gradient(90deg,#e49a60,#f4cfaa 45%,#f2dcc4 70%,#e8b890);border-radius:2px;border:1px solid #7a5a40"></div>
<svg style="left:2966px;top:226px" width="24" height="26" viewBox="0 0 24 26"><circle cx="7" cy="7" r="5" fill="#fff" stroke="#000" stroke-width="2.5" stroke-dasharray="2 1.2"/><circle cx="16" cy="17" r="6" fill="#3040d0" stroke="#2030a0" stroke-width="2.5" stroke-dasharray="2 1.2"/><circle cx="16" cy="17" r="2" fill="#fff"/></svg>
<div class="a" style="left:2968px;top:257px;width:20px;height:140px;"><div style="position:absolute;left:21px;top:0;transform:rotate(90deg);transform-origin:0 0;font-size:20px;color:#1e1e1e;white-space:nowrap;line-height:1">Design Director</div></div>
<div class="a" style="left:2964px;top:401px;width:29px;height:37px;background:linear-gradient(90deg,#5a5a5a,#c8c8c8 45%,#8a8a8a);border-radius:3px;border:1px solid #222"></div>
<svg style="left:2966px;top:407px" width="24" height="24" viewBox="0 0 24 24"><rect x="2" y="2" width="20" height="20" fill="#eee" stroke="#000" stroke-width="2"/><rect x="2" y="2" width="20" height="4" fill="#8aa0d0"/><path d="M9,8 V20 L12,17 L15,22 L17,21 L15,16 L19,16 Z" fill="#888"/></svg>
<div class="a" style="left:3000px;top:111px;width:4px;height:4px;background:#ddd"></div>
<div class="a" style="left:3008px;top:111px;width:4px;height:4px;background:#ddd"></div>
<div class="a" style="left:3016px;top:111px;width:4px;height:4px;background:#ddd"></div>
<div class="a" style="left:3024px;top:111px;width:4px;height:4px;background:#ddd"></div>
<div class="a" style="left:3032px;top:111px;width:4px;height:4px;background:#ddd"></div>
<svg style="left:2997px;top:126px" width="40" height="40" viewBox="0 0 40 40"><path d="M2,2 H12 V24 L20,32 L30,22 V8" fill="none" stroke="#cfcfcf" stroke-width="2.2"/><path d="M6,4 V22 L20,34" fill="none" stroke="#aaa" stroke-width="1.2"/></svg>
<svg style="left:2997px;top:181px" width="40" height="40" viewBox="0 0 40 40"><path d="M4,2 L38,38 M0,10 L30,40" stroke="#ddd" stroke-width="2" stroke-dasharray="3 2"/><path d="M2,30 L28,4" stroke="#a03040" stroke-width="2" stroke-dasharray="2 2"/></svg>
<svg style="left:2997px;top:232px" width="40" height="40" viewBox="0 0 40 40"><path d="M4,22 L16,10" stroke="#3a80e0" stroke-width="4"/><path d="M1,16 V26 H11 Z" fill="#3a80e0"/><path d="M20,8 L32,0" stroke="#d02020" stroke-width="4"/><rect x="12" y="6" width="10" height="10" fill="#fff" stroke="#000"/></svg>
<svg style="left:2997px;top:289px" width="40" height="40" viewBox="0 0 40 40"><rect x="2" y="2" width="12" height="12" fill="none" stroke="#60c040" stroke-width="2.5"/><path d="M16,8 H26 V18" fill="none" stroke="#3a80e0" stroke-width="3"/><rect x="20" y="18" width="16" height="14" fill="#b02020"/></svg>
<svg style="left:2997px;top:339px" width="40" height="40" viewBox="0 0 40 40"><path d="M4,14 H14 V4 H22 V14 H30 V28 H4 Z" fill="none" stroke="#cfcfcf" stroke-width="2"/></svg>
<svg style="left:2997px;top:393px" width="40" height="40" viewBox="0 0 40 40"><path d="M2,2 H20 V14 H34 V36 H14 V22 H2 Z" fill="none" stroke="#cfcfcf" stroke-width="2.5"/><path d="M8,8 H16 V18" fill="none" stroke="#aaa" stroke-width="1.5"/></svg>
<svg style="left:2997px;top:456px" width="40" height="40" viewBox="0 0 40 40"><rect x="6" y="2" width="30" height="24" fill="none" stroke="#cfcfcf" stroke-width="2"/><path d="M6,12 H36 M16,12 V26 M26,12 V26" stroke="#cfcfcf" stroke-width="2"/></svg>
<svg style="left:2997px;top:503px" width="40" height="40" viewBox="0 0 40 40"><path d="M10,2 H38 V26 H10 Z M4,8 V32 H32" fill="none" stroke="#cfcfcf" stroke-width="2"/><rect x="14" y="6" width="18" height="14" fill="none" stroke="#aaa" stroke-width="1.4"/></svg>
<svg style="left:2997px;top:549px" width="40" height="40" viewBox="0 0 40 40"><path d="M2,14 H18 V32 H2 Z" fill="#333" stroke="#fff" stroke-width="2"/><circle cx="24" cy="11" r="10" fill="#fff"/></svg>
<svg style="left:2997px;top:595px" width="40" height="40" viewBox="0 0 40 40"><path d="M6,2 L22,16 L14,24 L-2,10 Z" fill="#e8e050" stroke="#000" stroke-width="2"/><path d="M4,0 L8,-3" stroke="#d04040" stroke-width="3"/><path d="M2,30 H10 M6,26 V34 M20,30 H28" stroke="#40a0e0" stroke-width="2.5"/></svg>
<svg style="left:2997px;top:641px" width="40" height="40" viewBox="0 0 40 40"><rect x="2" y="2" width="16" height="18" fill="none" stroke="#ccc" stroke-width="2"/><path d="M5,5 L15,17 M15,5 L5,17" stroke="#aaa" stroke-width="1.5"/><rect x="14" y="12" width="24" height="24" fill="none" stroke="#ccc" stroke-width="2"/></svg>
<svg style="left:2997px;top:702px" width="40" height="40" viewBox="0 0 40 40"><circle cx="20" cy="17" r="15" fill="none" stroke="#e8e060" stroke-width="2"/><path d="M12,9 L18,15 M28,9 L22,15 M12,25 L18,19 M28,25 L22,19" stroke="#60c0f0" stroke-width="3"/></svg>
<svg style="left:2997px;top:748px" width="40" height="40" viewBox="0 0 40 40"><rect x="2" y="8" width="26" height="16" fill="#fff" stroke="#000" stroke-width="2.5"/><rect x="10" y="4" width="10" height="5" fill="#fff" stroke="#000" stroke-width="2"/><circle cx="15" cy="16" r="5" fill="#8ab0e0"/><path d="M12,34 L30,22" stroke="#3a80e0" stroke-width="2"/><rect x="8" y="31" width="7" height="7" fill="#3a80e0"/></svg>
<svg style="left:2997px;top:803px" width="40" height="40" viewBox="0 0 40 40"><path d="M4,4 H16 V10 H24 V28 H8 V34 H4 Z" fill="none" stroke="#cfcfcf" stroke-width="2"/><rect x="14" y="16" width="20" height="18" rx="3" fill="none" stroke="#bbb" stroke-width="2"/></svg>
<div class="a" style="left:2999px;top:169px;width:31px;height:3px;background:#e0e0e0;border-radius:1px"></div>
<div class="a" style="left:2999px;top:275px;width:31px;height:3px;background:#e0e0e0;border-radius:1px"></div>
<div class="a" style="left:2999px;top:380px;width:31px;height:3px;background:#e0e0e0;border-radius:1px"></div>
<div class="a" style="left:2999px;top:439px;width:31px;height:3px;background:#e0e0e0;border-radius:1px"></div>
<div class="a" style="left:2999px;top:687px;width:31px;height:3px;background:#e0e0e0;border-radius:1px"></div>
<div class="a" style="left:2999px;top:792px;width:31px;height:3px;background:#e0e0e0;border-radius:1px"></div>
<div class="a" style="left:80px;top:1500px;width:101px;height:30px;background:#232323;border:1px solid #555;border-top:none;border-radius:0 0 4px 4px;box-shadow:1px 1px 0 #111"></div>
<svg style="left:88px;top:1504px" width="22" height="22" viewBox="0 0 22 22"><circle cx="8" cy="8" r="6" fill="#fff" stroke="#000" stroke-width="1.5"/><circle cx="13" cy="14" r="6" fill="#fff" stroke="#000" stroke-width="1.5"/><path d="M3,13 Q6,20 14,20" fill="none" stroke="#888" stroke-width="1.5"/></svg>
<div class="a" style="left:112px;top:1503px;font-size:21px;line-height:1;color:#ececec;white-space:nowrap;transform:scaleX(0.98);transform-origin:0 0;">Model</div>
<div class="a" style="left:184px;top:1500px;width:108px;height:30px;background:#2a2a2a;border:1px solid #555;border-top:none;border-radius:0 0 4px 4px;box-shadow:1px 1px 0 #111"></div>
<svg style="left:192px;top:1504px" width="18" height="23" viewBox="0 0 18 23"><path d="M1,2 H12 L16,6 V21 H1 Z" fill="#fff" stroke="#000" stroke-width="1.5"/><path d="M12,2 V6 H16" fill="none" stroke="#000"/><text x="3" y="18" font-family="Liberation Sans" font-weight="bold" font-size="10" fill="#1a2a90">1</text></svg>
<div class="a" style="left:214px;top:1503px;font-size:21px;line-height:1;color:#e8e8e8;white-space:nowrap;transform:scaleX(0.92);transform-origin:0 0;">Arch&nbsp;&nbsp;A</div>
<div class="a" style="left:296px;top:1500px;width:107px;height:30px;background:#2a2a2a;border:1px solid #555;border-top:none;border-radius:0 0 4px 4px;box-shadow:1px 1px 0 #111"></div>
<svg style="left:304px;top:1504px" width="18" height="23" viewBox="0 0 18 23"><path d="M1,2 H12 L16,6 V21 H1 Z" fill="#fff" stroke="#000" stroke-width="1.5"/><path d="M12,2 V6 H16" fill="none" stroke="#000"/><text x="3" y="18" font-family="Liberation Sans" font-weight="bold" font-size="10" fill="#1a2a90">2</text></svg>
<div class="a" style="left:326px;top:1503px;font-size:21px;line-height:1;color:#e8e8e8;white-space:nowrap;transform:scaleX(0.92);transform-origin:0 0;">Arch&nbsp;&nbsp;B</div>
<div class="a" style="left:407px;top:1500px;width:108px;height:30px;background:#2a2a2a;border:1px solid #555;border-top:none;border-radius:0 0 4px 4px;box-shadow:1px 1px 0 #111"></div>
<svg style="left:415px;top:1504px" width="18" height="23" viewBox="0 0 18 23"><path d="M1,2 H12 L16,6 V21 H1 Z" fill="#fff" stroke="#000" stroke-width="1.5"/><path d="M12,2 V6 H16" fill="none" stroke="#000"/><text x="3" y="18" font-family="Liberation Sans" font-weight="bold" font-size="10" fill="#1a2a90">3</text></svg>
<div class="a" style="left:437px;top:1503px;font-size:21px;line-height:1;color:#e8e8e8;white-space:nowrap;transform:scaleX(0.92);transform-origin:0 0;">Arch&nbsp;&nbsp;C</div>
<div class="a" style="left:519px;top:1500px;width:107px;height:30px;background:#2a2a2a;border:1px solid #555;border-top:none;border-radius:0 0 4px 4px;box-shadow:1px 1px 0 #111"></div>
<svg style="left:527px;top:1504px" width="18" height="23" viewBox="0 0 18 23"><path d="M1,2 H12 L16,6 V21 H1 Z" fill="#fff" stroke="#000" stroke-width="1.5"/><path d="M12,2 V6 H16" fill="none" stroke="#000"/><text x="3" y="18" font-family="Liberation Sans" font-weight="bold" font-size="10" fill="#1a2a90">4</text></svg>
<div class="a" style="left:549px;top:1503px;font-size:21px;line-height:1;color:#e8e8e8;white-space:nowrap;transform:scaleX(0.92);transform-origin:0 0;">Arch&nbsp;&nbsp;D</div>
<div class="a" style="left:630px;top:1500px;width:105px;height:30px;background:#2a2a2a;border:1px solid #555;border-top:none;border-radius:0 0 4px 4px;box-shadow:1px 1px 0 #111"></div>
<svg style="left:638px;top:1504px" width="18" height="23" viewBox="0 0 18 23"><path d="M1,2 H12 L16,6 V21 H1 Z" fill="#fff" stroke="#000" stroke-width="1.5"/><path d="M12,2 V6 H16" fill="none" stroke="#000"/><text x="3" y="18" font-family="Liberation Sans" font-weight="bold" font-size="10" fill="#1a2a90">5</text></svg>
<div class="a" style="left:660px;top:1503px;font-size:21px;line-height:1;color:#e8e8e8;white-space:nowrap;transform:scaleX(0.92);transform-origin:0 0;">Arch&nbsp;&nbsp;E</div>
<div class="a" style="left:740px;top:1500px;width:112px;height:30px;background:#2a2a2a;border:1px solid #555;border-top:none;border-radius:0 0 4px 4px;box-shadow:1px 1px 0 #111"></div>
<svg style="left:748px;top:1504px" width="18" height="23" viewBox="0 0 18 23"><path d="M1,2 H12 L16,6 V21 H1 Z" fill="#fff" stroke="#000" stroke-width="1.5"/><path d="M12,2 V6 H16" fill="none" stroke="#000"/><text x="3" y="18" font-family="Liberation Sans" font-weight="bold" font-size="10" fill="#1a2a90">6</text></svg>
<div class="a" style="left:770px;top:1503px;font-size:21px;line-height:1;color:#e8e8e8;white-space:nowrap;transform:scaleX(0.92);transform-origin:0 0;">Arch&nbsp;&nbsp;E1</div>
<div class="a" style="left:896px;top:1500px;width:6px;height:32px;background:#fff"></div>
<svg style="left:911px;top:1510px" width="10" height="12" viewBox="0 0 10 12"><path d="M8,0 V12 L1,6 Z" fill="#f0f0f0"/></svg>
<svg style="left:2913px;top:1510px" width="10" height="12" viewBox="0 0 10 12"><path d="M2,0 V12 L9,6 Z" fill="#f0f0f0"/></svg>
<svg style="left:2938px;top:137px" width="14" height="9" viewBox="0 0 14 9"><path d="M0,9 L7,1 L14,9 Z" fill="#f0f0f0"/></svg>
<svg style="left:2938px;top:1480px" width="14" height="9" viewBox="0 0 14 9"><path d="M0,0 L7,8 L14,0 Z" fill="#f0f0f0"/></svg>
<svg style="left:5px;top:1557px" width="24" height="22" viewBox="0 0 24 22"><path d="M3,3 L21,19 M21,3 L3,19" stroke="#bdbdbd" stroke-width="6" stroke-linecap="round"/></svg>
<svg style="left:40px;top:1554px" width="26" height="24" viewBox="0 0 26 24"><rect x="1" y="1" width="24" height="22" fill="#7a7a7a" stroke="#111" stroke-width="2"/><path d="M2,7 H24 M2,12 H24 M2,17 H24 M7,7 V23 M13,7 V23 M19,7 V23" stroke="#555" stroke-width="1.2"/></svg>
<div class="a" style="left:74px;top:1546px;width:3px;height:45px;background:#ececec"></div>
<div class="a" style="left:82px;top:1541px;font-size:19px;line-height:1;color:#e8e8e8;white-space:nowrap;transform:scaleX(0.93);transform-origin:0 0;">Scale X</div>
<div class="a" style="left:81px;top:1564px;width:86px;height:30px;background:#2e2e2e;border:2px solid #bdbdbd"></div>
<div class="a" style="left:87px;top:1567px;font-size:22px;line-height:1;color:#8a8a8a;white-space:nowrap;transform:scaleX(0.9);transform-origin:0 0;">1</div>
<div class="a" style="left:143px;top:1566px;width:22px;height:13px;background:#3a3a3a;border:1px solid #9a9a9a"></div>
<div class="a" style="left:143px;top:1579px;width:22px;height:13px;background:#3a3a3a;border:1px solid #9a9a9a"></div>
<svg style="left:150px;top:1570px" width="8" height="5" viewBox="0 0 8 5"><path d="M0,5 L4,0 L8,5 Z" fill="#ccc"/></svg>
<svg style="left:150px;top:1584px" width="8" height="5" viewBox="0 0 8 5"><path d="M0,0 L4,5 L8,0 Z" fill="#ccc"/></svg>
<div class="a" style="left:170.5px;top:1541px;font-size:19px;line-height:1;color:#e8e8e8;white-space:nowrap;transform:scaleX(0.93);transform-origin:0 0;">Scale Y</div>
<div class="a" style="left:169.5px;top:1564px;width:86px;height:30px;background:#2e2e2e;border:2px solid #bdbdbd"></div>
<div class="a" style="left:175.5px;top:1567px;font-size:22px;line-height:1;color:#8a8a8a;white-space:nowrap;transform:scaleX(0.9);transform-origin:0 0;">1</div>
<div class="a" style="left:231.5px;top:1566px;width:22px;height:13px;background:#3a3a3a;border:1px solid #9a9a9a"></div>
<div class="a" style="left:231.5px;top:1579px;width:22px;height:13px;background:#3a3a3a;border:1px solid #9a9a9a"></div>
<svg style="left:238.5px;top:1570px" width="8" height="5" viewBox="0 0 8 5"><path d="M0,5 L4,0 L8,5 Z" fill="#ccc"/></svg>
<svg style="left:238.5px;top:1584px" width="8" height="5" viewBox="0 0 8 5"><path d="M0,0 L4,5 L8,0 Z" fill="#ccc"/></svg>
<div class="a" style="left:258px;top:1541px;font-size:19px;line-height:1;color:#e8e8e8;white-space:nowrap;transform:scaleX(0.93);transform-origin:0 0;">Size X</div>
<div class="a" style="left:257px;top:1564px;width:86px;height:30px;background:#2e2e2e;border:2px solid #bdbdbd"></div>
<div class="a" style="left:263px;top:1567px;font-size:22px;line-height:1;color:#8a8a8a;white-space:nowrap;transform:scaleX(0.9);transform-origin:0 0;">0"</div>
<div class="a" style="left:319px;top:1566px;width:22px;height:13px;background:#3a3a3a;border:1px solid #9a9a9a"></div>
<div class="a" style="left:319px;top:1579px;width:22px;height:13px;background:#3a3a3a;border:1px solid #9a9a9a"></div>
<svg style="left:326px;top:1570px" width="8" height="5" viewBox="0 0 8 5"><path d="M0,5 L4,0 L8,5 Z" fill="#ccc"/></svg>
<svg style="left:326px;top:1584px" width="8" height="5" viewBox="0 0 8 5"><path d="M0,0 L4,5 L8,0 Z" fill="#ccc"/></svg>
<div class="a" style="left:346px;top:1541px;font-size:19px;line-height:1;color:#e8e8e8;white-space:nowrap;transform:scaleX(0.93);transform-origin:0 0;">Size Y</div>
<div class="a" style="left:345px;top:1564px;width:86px;height:30px;background:#2e2e2e;border:2px solid #bdbdbd"></div>
<div class="a" style="left:351px;top:1567px;font-size:22px;line-height:1;color:#8a8a8a;white-space:nowrap;transform:scaleX(0.9);transform-origin:0 0;">0"</div>
<div class="a" style="left:407px;top:1566px;width:22px;height:13px;background:#3a3a3a;border:1px solid #9a9a9a"></div>
<div class="a" style="left:407px;top:1579px;width:22px;height:13px;background:#3a3a3a;border:1px solid #9a9a9a"></div>
<svg style="left:414px;top:1570px" width="8" height="5" viewBox="0 0 8 5"><path d="M0,5 L4,0 L8,5 Z" fill="#ccc"/></svg>
<svg style="left:414px;top:1584px" width="8" height="5" viewBox="0 0 8 5"><path d="M0,0 L4,5 L8,0 Z" fill="#ccc"/></svg>
<div class="a" style="left:433px;top:1541px;font-size:19px;line-height:1;color:#e8e8e8;white-space:nowrap;transform:scaleX(0.93);transform-origin:0 0;">Pos X</div>
<div class="a" style="left:432px;top:1564px;width:86px;height:30px;background:#2e2e2e;border:2px solid #bdbdbd"></div>
<div class="a" style="left:438px;top:1567px;font-size:22px;line-height:1;color:#8a8a8a;white-space:nowrap;transform:scaleX(0.9);transform-origin:0 0;">0"</div>
<div class="a" style="left:494px;top:1566px;width:22px;height:13px;background:#3a3a3a;border:1px solid #9a9a9a"></div>
<div class="a" style="left:494px;top:1579px;width:22px;height:13px;background:#3a3a3a;border:1px solid #9a9a9a"></div>
<svg style="left:501px;top:1570px" width="8" height="5" viewBox="0 0 8 5"><path d="M0,5 L4,0 L8,5 Z" fill="#ccc"/></svg>
<svg style="left:501px;top:1584px" width="8" height="5" viewBox="0 0 8 5"><path d="M0,0 L4,5 L8,0 Z" fill="#ccc"/></svg>
<div class="a" style="left:521px;top:1541px;font-size:19px;line-height:1;color:#e8e8e8;white-space:nowrap;transform:scaleX(0.93);transform-origin:0 0;">Pos Y</div>
<div class="a" style="left:520px;top:1564px;width:86px;height:30px;background:#2e2e2e;border:2px solid #bdbdbd"></div>
<div class="a" style="left:526px;top:1567px;font-size:22px;line-height:1;color:#8a8a8a;white-space:nowrap;transform:scaleX(0.9);transform-origin:0 0;">0"</div>
<div class="a" style="left:582px;top:1566px;width:22px;height:13px;background:#3a3a3a;border:1px solid #9a9a9a"></div>
<div class="a" style="left:582px;top:1579px;width:22px;height:13px;background:#3a3a3a;border:1px solid #9a9a9a"></div>
<svg style="left:589px;top:1570px" width="8" height="5" viewBox="0 0 8 5"><path d="M0,5 L4,0 L8,5 Z" fill="#ccc"/></svg>
<svg style="left:589px;top:1584px" width="8" height="5" viewBox="0 0 8 5"><path d="M0,0 L4,5 L8,0 Z" fill="#ccc"/></svg>
<div class="a" style="left:609px;top:1541px;font-size:19px;line-height:1;color:#e8e8e8;white-space:nowrap;transform:scaleX(0.93);transform-origin:0 0;">Delta X</div>
<div class="a" style="left:608px;top:1564px;width:86px;height:30px;background:#2e2e2e;border:2px solid #bdbdbd"></div>
<div class="a" style="left:614px;top:1567px;font-size:22px;line-height:1;color:#8a8a8a;white-space:nowrap;transform:scaleX(0.9);transform-origin:0 0;">0"</div>
<div class="a" style="left:670px;top:1566px;width:22px;height:13px;background:#3a3a3a;border:1px solid #9a9a9a"></div>
<div class="a" style="left:670px;top:1579px;width:22px;height:13px;background:#3a3a3a;border:1px solid #9a9a9a"></div>
<svg style="left:677px;top:1570px" width="8" height="5" viewBox="0 0 8 5"><path d="M0,5 L4,0 L8,5 Z" fill="#ccc"/></svg>
<svg style="left:677px;top:1584px" width="8" height="5" viewBox="0 0 8 5"><path d="M0,0 L4,5 L8,0 Z" fill="#ccc"/></svg>
<div class="a" style="left:697px;top:1541px;font-size:19px;line-height:1;color:#e8e8e8;white-space:nowrap;transform:scaleX(0.93);transform-origin:0 0;">Delta Y</div>
<div class="a" style="left:696px;top:1564px;width:86px;height:30px;background:#2e2e2e;border:2px solid #bdbdbd"></div>
<div class="a" style="left:702px;top:1567px;font-size:22px;line-height:1;color:#8a8a8a;white-space:nowrap;transform:scaleX(0.9);transform-origin:0 0;">0"</div>
<div class="a" style="left:758px;top:1566px;width:22px;height:13px;background:#3a3a3a;border:1px solid #9a9a9a"></div>
<div class="a" style="left:758px;top:1579px;width:22px;height:13px;background:#3a3a3a;border:1px solid #9a9a9a"></div>
<svg style="left:765px;top:1570px" width="8" height="5" viewBox="0 0 8 5"><path d="M0,5 L4,0 L8,5 Z" fill="#ccc"/></svg>
<svg style="left:765px;top:1584px" width="8" height="5" viewBox="0 0 8 5"><path d="M0,0 L4,5 L8,0 Z" fill="#ccc"/></svg>
<div class="a" style="left:784px;top:1541px;font-size:19px;line-height:1;color:#e8e8e8;white-space:nowrap;transform:scaleX(0.93);transform-origin:0 0;">Rot</div>
<div class="a" style="left:783px;top:1564px;width:86px;height:30px;background:#2e2e2e;border:2px solid #bdbdbd"></div>
<div class="a" style="left:789px;top:1567px;font-size:22px;line-height:1;color:#8a8a8a;white-space:nowrap;transform:scaleX(0.9);transform-origin:0 0;">0</div>
<div class="a" style="left:845px;top:1566px;width:22px;height:13px;background:#3a3a3a;border:1px solid #9a9a9a"></div>
<div class="a" style="left:845px;top:1579px;width:22px;height:13px;background:#3a3a3a;border:1px solid #9a9a9a"></div>
<svg style="left:852px;top:1570px" width="8" height="5" viewBox="0 0 8 5"><path d="M0,5 L4,0 L8,5 Z" fill="#ccc"/></svg>
<svg style="left:852px;top:1584px" width="8" height="5" viewBox="0 0 8 5"><path d="M0,0 L4,5 L8,0 Z" fill="#ccc"/></svg>
<div class="a" style="left:871px;top:1541px;font-size:19px;line-height:1;color:#e8e8e8;white-space:nowrap;transform:scaleX(0.93);transform-origin:0 0;">Delta Dist</div>
<div class="a" style="left:870px;top:1564px;width:86px;height:30px;background:#2e2e2e;border:2px solid #bdbdbd"></div>
<div class="a" style="left:876px;top:1567px;font-size:22px;line-height:1;color:#8a8a8a;white-space:nowrap;transform:scaleX(0.9);transform-origin:0 0;">0"</div>
<div class="a" style="left:932px;top:1566px;width:22px;height:13px;background:#3a3a3a;border:1px solid #9a9a9a"></div>
<div class="a" style="left:932px;top:1579px;width:22px;height:13px;background:#3a3a3a;border:1px solid #9a9a9a"></div>
<svg style="left:939px;top:1570px" width="8" height="5" viewBox="0 0 8 5"><path d="M0,5 L4,0 L8,5 Z" fill="#ccc"/></svg>
<svg style="left:939px;top:1584px" width="8" height="5" viewBox="0 0 8 5"><path d="M0,0 L4,5 L8,0 Z" fill="#ccc"/></svg>
<div class="a" style="left:959.6px;top:1541px;font-size:19px;line-height:1;color:#e8e8e8;white-space:nowrap;transform:scaleX(0.93);transform-origin:0 0;">Delta Ang</div>
<div class="a" style="left:958.6px;top:1564px;width:86px;height:30px;background:#2e2e2e;border:2px solid #bdbdbd"></div>
<div class="a" style="left:964.6px;top:1567px;font-size:22px;line-height:1;color:#8a8a8a;white-space:nowrap;transform:scaleX(0.9);transform-origin:0 0;">0</div>
<div class="a" style="left:1020.6px;top:1566px;width:22px;height:13px;background:#3a3a3a;border:1px solid #9a9a9a"></div>
<div class="a" style="left:1020.6px;top:1579px;width:22px;height:13px;background:#3a3a3a;border:1px solid #9a9a9a"></div>
<svg style="left:1027.6px;top:1570px" width="8" height="5" viewBox="0 0 8 5"><path d="M0,5 L4,0 L8,5 Z" fill="#ccc"/></svg>
<svg style="left:1027.6px;top:1584px" width="8" height="5" viewBox="0 0 8 5"><path d="M0,0 L4,5 L8,0 Z" fill="#ccc"/></svg>
<div class="a" style="left:1048px;top:1546px;width:3px;height:45px;background:#ececec"></div>
<svg style="left:1061px;top:1553px" width="25" height="24" viewBox="0 0 25 24"><rect x="1" y="13" width="8" height="8" fill="none" stroke="#fff" stroke-width="1.5"/><path d="M6,10 L14,3 H24 V9 H14" fill="#000" stroke="#fff" stroke-width="1.3"/></svg>
<div class="a" style="left:1090px;top:1550px;width:34px;height:32px;background:#5a5a5a;border:3px solid #e0802a"></div>
<svg style="left:1094px;top:1554px" width="26" height="24" viewBox="0 0 26 24"><rect x="2" y="2" width="8" height="8" fill="none" stroke="#fff" stroke-width="1.5"/><path d="M6,22 L22,4" stroke="#ddd" stroke-width="1.5"/><path d="M14,12 L20,10 L24,14 V22 L18,24 L14,20 Z" fill="none" stroke="#fff" stroke-width="1.5"/></svg>
<svg style="left:1131px;top:1553px" width="24" height="24" viewBox="0 0 24 24"><path d="M2,22 Q4,10 12,12 Q18,14 22,4" fill="none" stroke="#fff" stroke-width="2"/><circle cx="12" cy="12" r="3" fill="#e8e850"/><path d="M16,16 L22,22 L20,16 Z" fill="#fff" stroke="#000"/></svg>
<div class="a" style="left:1164px;top:1546px;width:3px;height:45px;background:#ececec"></div>
<div class="a" style="left:1168px;top:1550px;width:36px;height:32px;background:#5a5a5a;border:3px solid #e0802a"></div>
<svg style="left:1172px;top:1554px" width="28" height="24" viewBox="0 0 28 24"><path d="M2,2 L26,22 H2 Z" fill="#e86060"/><path d="M2,2 H26 V22 Z" fill="#c020c0"/><rect x="2" y="2" width="24" height="20" fill="none" stroke="#fff" stroke-width="1.2" stroke-dasharray="2 1.5"/></svg>
<svg style="left:1209px;top:1551px" width="27" height="26" viewBox="0 0 27 26"><path d="M2,24 L2,6 L22,24 Z" fill="#e86060" stroke="#fff" stroke-width="1.5"/><text x="10" y="11" font-family="Liberation Sans" font-weight="bold" font-size="10" fill="#fff" stroke="#000" stroke-width=".5">WP</text></svg>
<svg style="left:1243px;top:1551px" width="27" height="26" viewBox="0 0 27 26"><path d="M2,24 L2,4 L24,24 Z" fill="#c020d0" stroke="#fff" stroke-width="1.5" stroke-dasharray="2 1"/><text x="12" y="11" font-family="Liberation Sans" font-weight="bold" font-size="10" fill="#fff" stroke="#000" stroke-width=".5">CP</text></svg>
<svg style="left:1279px;top:1551px" width="27" height="26" viewBox="0 0 27 26"><path d="M2,6 H14 V14 H20 V24 H8 V18 H2 Z" fill="#c020d0" stroke="#fff" stroke-width="1.5"/><text x="16" y="12" font-family="Liberation Sans" font-weight="bold" font-size="11" fill="#fff" stroke="#000" stroke-width=".5">F</text></svg>
<div class="a" style="left:1314px;top:1546px;width:3px;height:45px;background:#ececec"></div>
<svg style="left:1324px;top:1554px" width="25" height="26" viewBox="0 0 25 26"><path d="M2,8 H14 Q22,8 20,16" fill="none" stroke="#e040e0" stroke-width="4"/><path d="M2,4 V12 H8" fill="#e040e0"/><path d="M14,12 V26 L18,22 L21,28 L23,27 L20,21 L25,21 Z" fill="#000" stroke="#fff"/></svg>
<svg style="left:1361px;top:1554px" width="25" height="26" viewBox="0 0 25 26"><path d="M2,2 H16 L10,12 Z" fill="#40c0e0"/><path d="M10,22 L22,12 V22 Z" fill="#e8e040"/><path d="M2,2 V22 H22" fill="none" stroke="#2a6ab0" stroke-width="1.2" stroke-dasharray="2 1"/></svg>
<svg style="left:1395px;top:1554px" width="25" height="26" viewBox="0 0 25 26"><path d="M8,24 L14,6 L20,24 Z M2,24 L8,12 L14,24" fill="none" stroke="#40c8d0" stroke-width="1.8"/></svg>
<svg style="left:1431px;top:1554px" width="25" height="26" viewBox="0 0 25 26"><rect x="6" y="2" width="12" height="8" rx="2" fill="#fff"/><path d="M12,10 V14 M4,14 H20 M4,14 V18 M20,14 V18" stroke="#fff" stroke-width="2"/><rect x="0" y="18" width="24" height="6" fill="#fff"/></svg>
<svg style="left:1465px;top:1554px" width="25" height="26" viewBox="0 0 25 26"><rect x="3" y="6" width="16" height="16" fill="none" stroke="#e0e040" stroke-width="2"/><path d="M3,22 L19,6" stroke="#40b0e0" stroke-width="1.8"/><path d="M19,6 L24,1" stroke="#40b0e0" stroke-dasharray="2 1"/></svg>
<svg style="left:1501px;top:1554px" width="25" height="26" viewBox="0 0 25 26"><rect x="3" y="3" width="18" height="18" fill="none" stroke="#aaa" stroke-width="1.5" stroke-dasharray="2 1"/><circle cx="12" cy="12" r="3" fill="#ddd"/><path d="M12,3 V21 M3,12 H21" stroke="#999" stroke-width="1.2"/></svg>
<svg style="left:1535px;top:1554px" width="25" height="26" viewBox="0 0 25 26"><rect x="3" y="9" width="14" height="14" fill="none" stroke="#aaa" stroke-width="1.5" stroke-dasharray="2 1"/><rect x="18" y="2" width="6" height="6" fill="#ddd"/><rect x="8" y="14" width="5" height="5" fill="#fff"/></svg>
<svg style="left:1570px;top:1554px" width="25" height="26" viewBox="0 0 25 26"><path d="M2,22 L22,4" stroke="#aaa" stroke-width="1.5"/><rect x="4" y="14" width="6" height="6" fill="#ddd"/><rect x="16" y="2" width="6" height="6" fill="#ddd"/><path d="M16,10 V22" stroke="#aaa" stroke-dasharray="2 1"/></svg>
<svg style="left:1608px;top:1554px" width="25" height="26" viewBox="0 0 25 26"><rect x="3" y="3" width="18" height="18" fill="none" stroke="#e0e040" stroke-width="2"/><path d="M3,21 L21,3" stroke="#40c0e0" stroke-width="2"/><rect x="0" y="0" width="5" height="5" fill="#aef"/><rect x="19" y="19" width="5" height="5" fill="#aef"/></svg>
<div class="a" style="left:0px;top:1609px;font-size:18px;line-height:1;color:#ececec;white-space:nowrap;">Select object(s)</div>
<div class="a" style="left:2277px;top:1601px;width:753px;height:31px;background:linear-gradient(#323232,#4e4e4e 60%,#6a6a6a)"></div>
<div class="a" style="left:2283px;top:1610px;font-size:22px;line-height:1;color:#f0f0f0;white-space:nowrap;transform:scaleX(0.8);transform-origin:0 0;">SNAP</div>
<div class="a" style="left:2334px;top:1604px;width:2px;height:28px;background:#e8e8e8"></div>
<div class="a" style="left:2344px;top:1610px;font-size:22px;line-height:1;color:#f0f0f0;white-space:nowrap;transform:scaleX(0.8);transform-origin:0 0;">GEO</div>
<div class="a" style="left:2383px;top:1604px;width:2px;height:28px;background:#e8e8e8"></div>
<div class="a" style="left:2413px;top:1607px;width:11px;height:10px;background:#f4f4f4"></div>
<div class="a" style="left:2412px;top:1618px;font-size:15px;line-height:1;color:#ddd;white-space:nowrap;">X</div>
<div class="a" style="left:2429px;top:1607px;width:115px;height:25px;background:#000;border:2px solid #9a9a9a;border-bottom:none"></div>
<div class="a" style="left:2436px;top:1611px;font-size:20px;line-height:1;color:#f4f4f4;white-space:nowrap;transform:scaleX(0.92);transform-origin:0 0;">-15'-10 51/64</div>
<div class="a" style="left:2566px;top:1607px;width:11px;height:10px;background:#f4f4f4"></div>
<div class="a" style="left:2565px;top:1618px;font-size:15px;line-height:1;color:#ddd;white-space:nowrap;">Y</div>
<div class="a" style="left:2583px;top:1607px;width:115px;height:25px;background:#000;border:2px solid #9a9a9a;border-bottom:none"></div>
<div class="a" style="left:2590px;top:1611px;font-size:20px;line-height:1;color:#f4f4f4;white-space:nowrap;transform:scaleX(0.92);transform-origin:0 0;">35'-6 3/8"</div>
<div class="a" style="left:2720px;top:1607px;width:11px;height:10px;background:#f4f4f4"></div>
<div class="a" style="left:2719px;top:1618px;font-size:15px;line-height:1;color:#ddd;white-space:nowrap;">Z</div>
<div class="a" style="left:2736px;top:1607px;width:115px;height:25px;background:#000;border:2px solid #9a9a9a;border-bottom:none"></div>
<div class="a" style="left:2743px;top:1611px;font-size:20px;line-height:1;color:#f4f4f4;white-space:nowrap;transform:scaleX(0.92);transform-origin:0 0;">0"</div>
<div class="a" style="left:2861px;top:1604px;width:2px;height:28px;background:#e8e8e8"></div>
<div class="a" style="left:2867px;top:1609px;font-size:20px;line-height:1;color:#e8e8e8;white-space:nowrap;transform:scaleX(0.9);transform-origin:0 0;">3%</div>
<div class="a" style="left:2951px;top:1604px;width:2px;height:28px;background:#e8e8e8"></div>
<div class="a" style="left:2957px;top:1609px;font-size:20px;line-height:1;color:#e8e8e8;white-space:nowrap;transform:scaleX(0.92);transform-origin:0 0;">4:37 PM</div>
</body></html>
